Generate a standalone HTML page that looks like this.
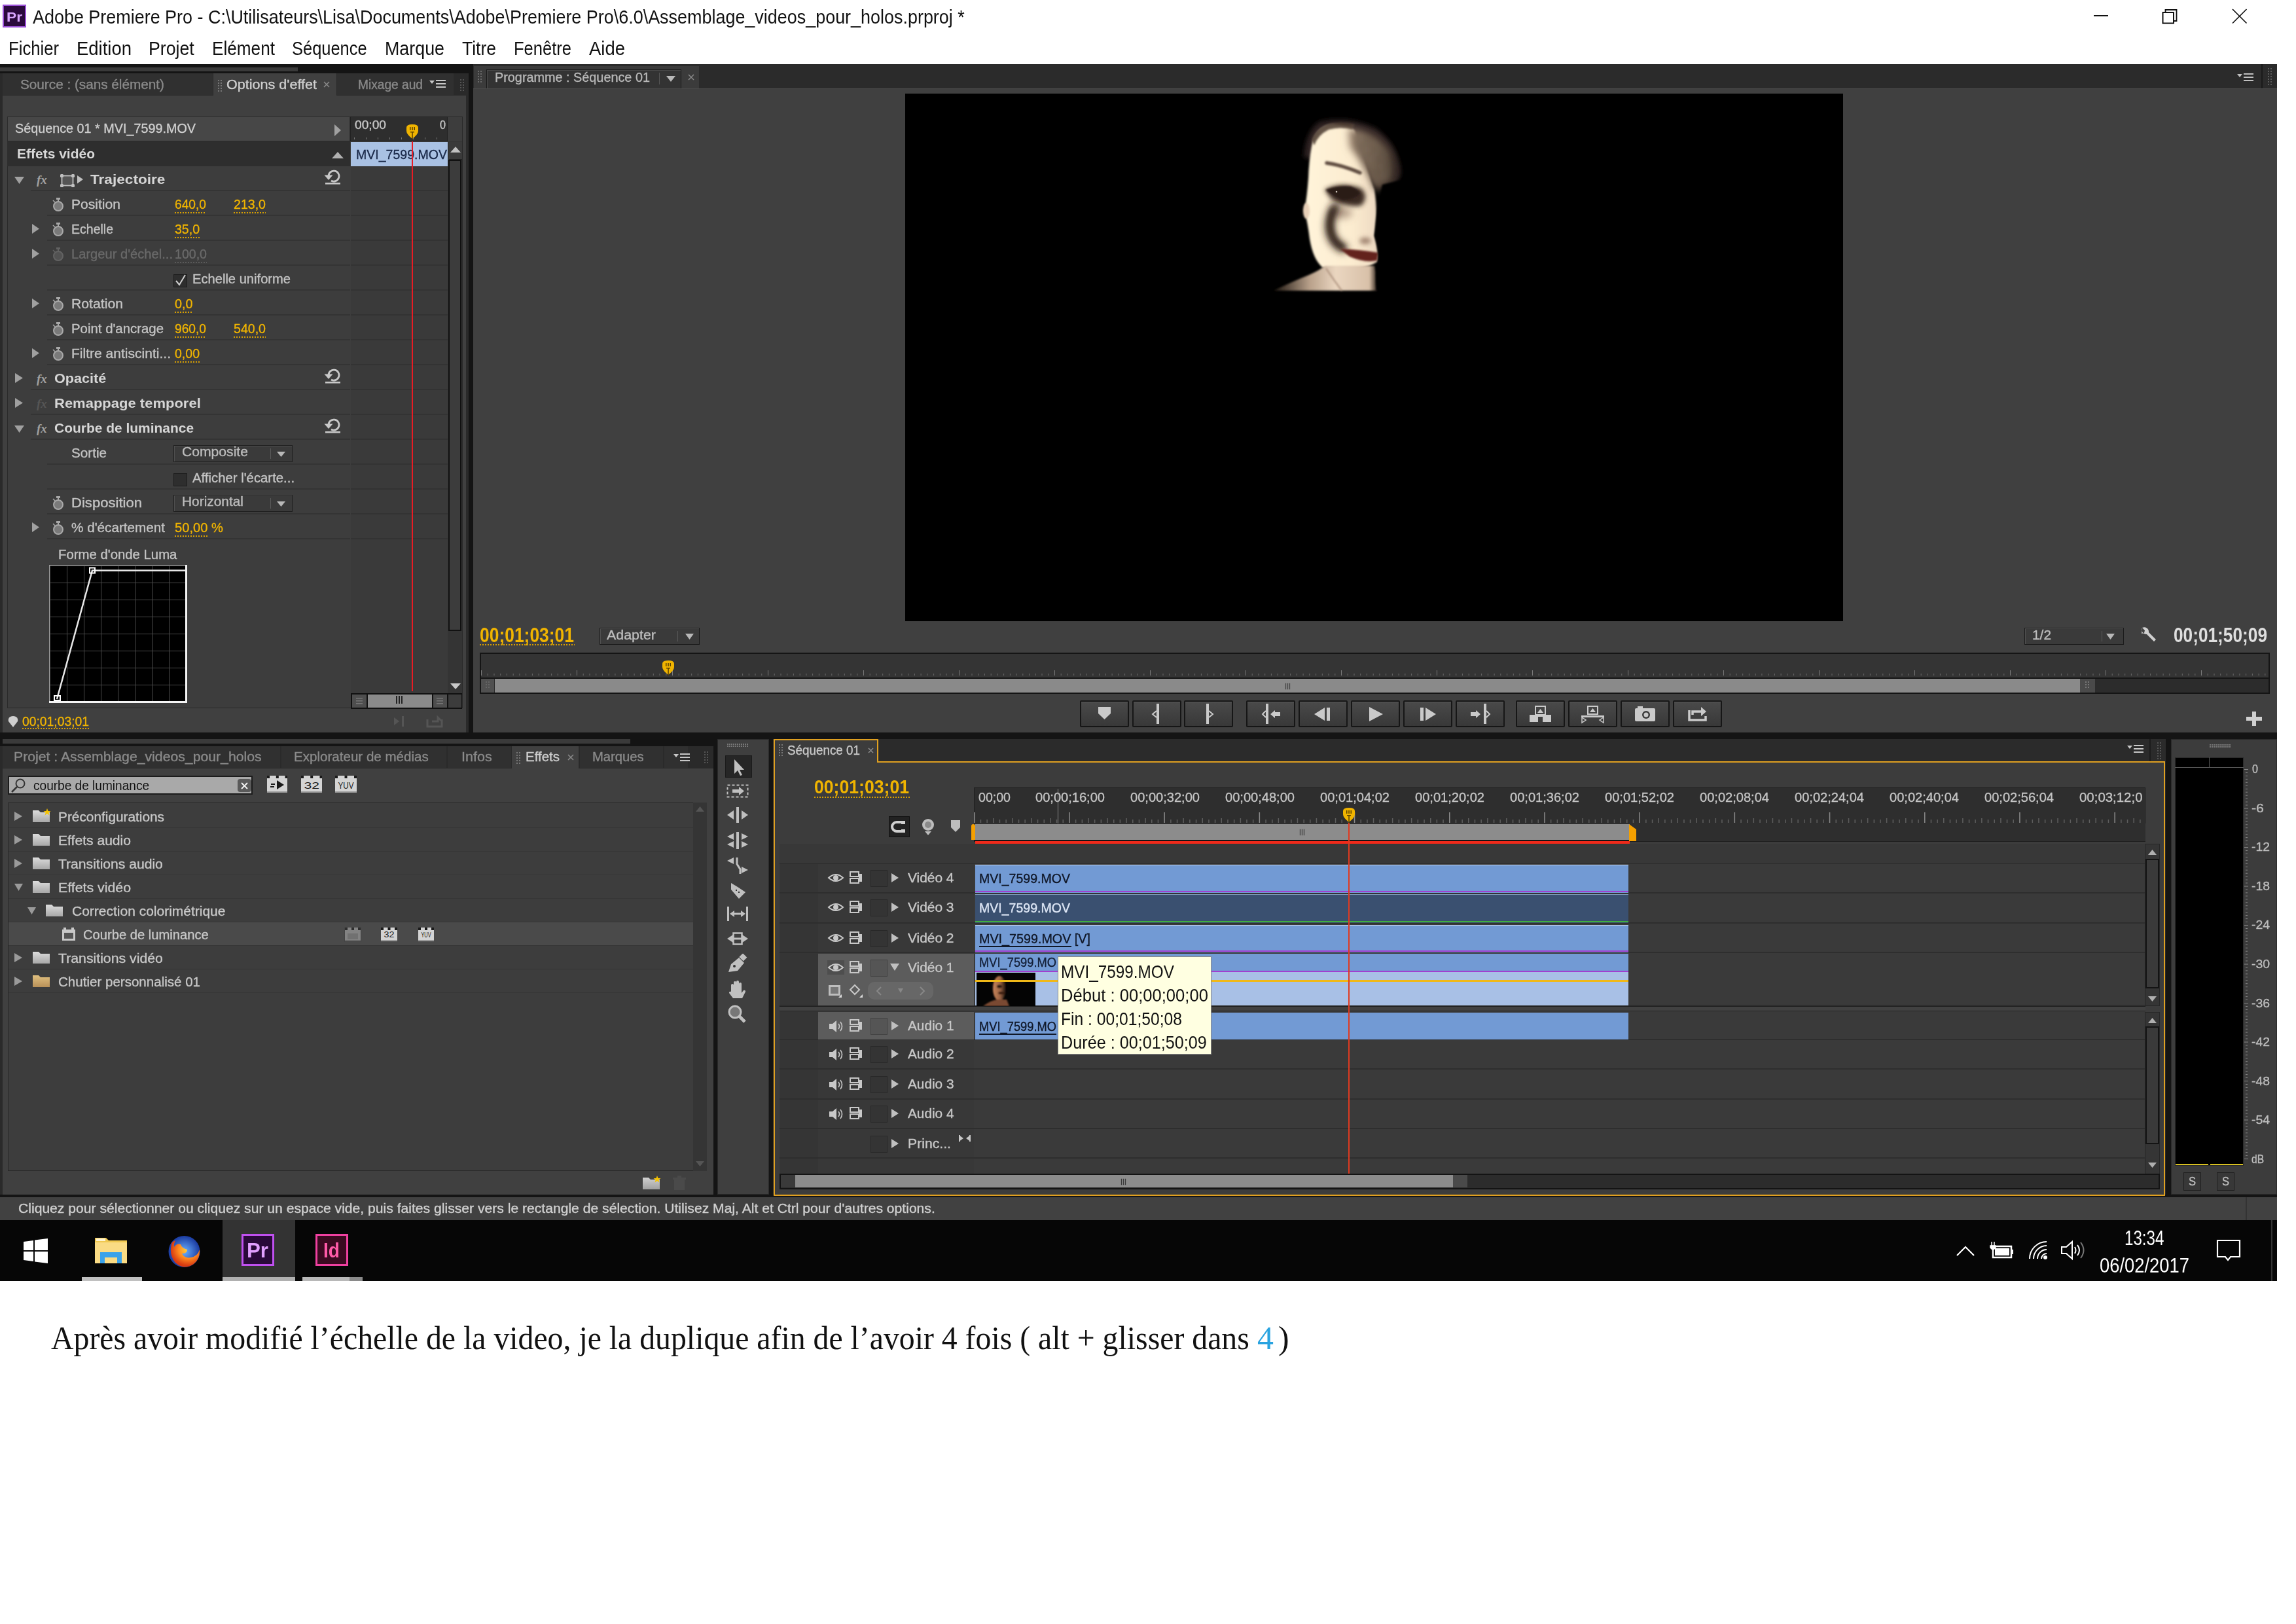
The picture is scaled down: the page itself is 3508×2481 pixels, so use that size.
<!DOCTYPE html><html><head><meta charset="utf-8"><style>
html,body{margin:0;padding:0;background:#fff;}
body{width:3508px;height:2481px;position:relative;overflow:hidden;font-family:"Liberation Sans",sans-serif;}
.a{position:absolute;box-sizing:border-box;}
.t{position:absolute;white-space:nowrap;line-height:1;transform-origin:0 0;}
.ui{-webkit-text-stroke:0.35px currentColor;}
</style></head><body>
<div class="a" style="left:4px;top:7px;width:36px;height:35px;background:#2b0a3d;border:2px solid #9a4fd6;"></div>
<div class="t" style="left:10.0px;top:15.8px;font-size:20.35px;color:#d9a6ff;font-weight:bold;transform:scaleX(1.1166);">Pr</div>
<div class="t" style="left:50.0px;top:12.0px;font-size:29.07px;color:#111;transform:scaleX(0.9268);">Adobe Premiere Pro - C:\Utilisateurs\Lisa\Documents\Adobe\Premiere Pro\6.0\Assemblage_videos_pour_holos.prproj *</div>
<div class="t" style="left:13.4px;top:60.2px;font-size:29.07px;color:#111;transform:scaleX(0.8840);">Fichier</div>
<div class="t" style="left:116.5px;top:60.2px;font-size:29.07px;color:#111;transform:scaleX(0.9451);">Edition</div>
<div class="t" style="left:227.0px;top:60.2px;font-size:29.07px;color:#111;transform:scaleX(0.9192);">Projet</div>
<div class="t" style="left:324.0px;top:60.2px;font-size:29.07px;color:#111;transform:scaleX(0.9003);">Elément</div>
<div class="t" style="left:446.0px;top:60.2px;font-size:29.07px;color:#111;transform:scaleX(0.8761);">Séquence</div>
<div class="t" style="left:588.0px;top:60.2px;font-size:29.07px;color:#111;transform:scaleX(0.9233);">Marque</div>
<div class="t" style="left:706.0px;top:60.2px;font-size:29.07px;color:#111;transform:scaleX(0.9113);">Titre</div>
<div class="t" style="left:785.0px;top:60.2px;font-size:29.07px;color:#111;transform:scaleX(0.8785);">Fenêtre</div>
<div class="t" style="left:899.6px;top:60.2px;font-size:29.07px;color:#111;transform:scaleX(0.9453);">Aide</div>
<div class="a" style="left:3199px;top:23px;width:22px;height:2px;background:#111;"></div>
<svg class="a" style="left:3303px;top:14px;" width="24" height="23" viewBox="0 0 24 23"><rect x="1.5" y="5" width="16.5" height="16.5" fill="none" stroke="#111" stroke-width="2"/><path d="M5.5 5V1h17v17h-4.5" fill="none" stroke="#111" stroke-width="1.8"/></svg>
<svg class="a" style="left:3410px;top:13px;" width="24" height="24" viewBox="0 0 24 24"><path d="M1 1L22.5 22.5M22.5 1L1 22.5" stroke="#111" stroke-width="1.7"/></svg>
<div class="a" style="left:0px;top:98px;width:3479px;height:1766px;background:#141414;"></div>
<div class="a" style="left:0px;top:103px;width:455px;height:6px;background:#3a3a3a;"></div>
<div class="a" style="left:0px;top:112px;width:716px;height:1007px;background:#2a2a2a;"></div>
<div class="a" style="left:4px;top:146px;width:708px;height:973px;background:#404040;"></div>
<div class="a" style="left:4px;top:112px;width:321px;height:33px;background:#303030;"></div>
<div class="a" style="left:326px;top:112px;width:188px;height:35px;background:#404040;"></div>
<div class="a" style="left:515px;top:112px;width:178px;height:33px;background:#303030;"></div>
<div class="t ui" style="left:31.0px;top:118.8px;font-size:20.35px;color:#8a8a8a;transform:scaleX(1.0185);">Source : (sans élément)</div>
<svg class="a" style="left:333px;top:122px;" width="6" height="18" viewBox="0 0 6 18"><rect x="0" y="0" width="2" height="2" fill="#777"/><rect x="4" y="0" width="2" height="2" fill="#777"/><rect x="0" y="4" width="2" height="2" fill="#777"/><rect x="4" y="4" width="2" height="2" fill="#777"/><rect x="0" y="8" width="2" height="2" fill="#777"/><rect x="4" y="8" width="2" height="2" fill="#777"/><rect x="0" y="12" width="2" height="2" fill="#777"/><rect x="4" y="12" width="2" height="2" fill="#777"/><rect x="0" y="16" width="2" height="2" fill="#777"/><rect x="4" y="16" width="2" height="2" fill="#777"/></svg>
<div class="t ui" style="left:346.0px;top:118.8px;font-size:20.35px;color:#cfcfcf;transform:scaleX(1.0599);">Options d'effet</div>
<svg class="a" style="left:494px;top:124px;" width="10" height="10" viewBox="0 0 10 10"><path d="M1 1L9 9M9 1L1 9" stroke="#8a8a8a" stroke-width="1.5"/></svg>
<div class="t ui" style="left:547.0px;top:118.8px;font-size:20.35px;color:#8a8a8a;transform:scaleX(0.9411);">Mixage aud</div>
<svg class="a" style="left:656px;top:120px;" width="26" height="16" viewBox="0 0 26 16"><polygon points="0,3 8,3 4,8" fill="#c8c8c8"/><rect x="10" y="2" width="15" height="2" fill="#c8c8c8"/><rect x="10" y="7" width="15" height="2" fill="#c8c8c8"/><rect x="10" y="12" width="15" height="2" fill="#c8c8c8"/></svg>
<svg class="a" style="left:703px;top:121px;" width="6" height="18" viewBox="0 0 6 18"><rect x="0" y="0" width="2" height="2" fill="#555"/><rect x="4" y="0" width="2" height="2" fill="#555"/><rect x="0" y="4" width="2" height="2" fill="#555"/><rect x="4" y="4" width="2" height="2" fill="#555"/><rect x="0" y="8" width="2" height="2" fill="#555"/><rect x="4" y="8" width="2" height="2" fill="#555"/><rect x="0" y="12" width="2" height="2" fill="#555"/><rect x="4" y="12" width="2" height="2" fill="#555"/><rect x="0" y="16" width="2" height="2" fill="#555"/><rect x="4" y="16" width="2" height="2" fill="#555"/></svg>
<div class="a" style="left:11px;top:178px;width:696px;height:904px;background:#3d3d3d;border:1px solid #2a2a2a;"></div>
<div class="a" style="left:11px;top:178px;width:524px;height:38px;background:#474747;border:1px solid #2c2c2c;"></div>
<div class="t ui" style="left:22.6px;top:185.2px;font-size:21.08px;color:#cfcfcf;transform:scaleX(0.9386);">Séquence 01 * MVI_7599.MOV</div>
<svg class="a" style="left:511px;top:190px;" width="10" height="18" viewBox="0 0 10 18"><polygon points="0,0 10,9.0 0,18" fill="#a0a0a0"/></svg>
<div class="a" style="left:535px;top:178px;width:149px;height:38px;background:#2e2e2e;border:1px solid #222;"></div>
<div class="t ui" style="left:541.5px;top:181.5px;font-size:18.90px;color:#c8c8c8;transform:scaleX(1.0152);">00;00</div>
<div class="t ui" style="left:671.8px;top:181.5px;font-size:18.90px;color:#c8c8c8;transform:scaleX(0.8565);">0</div>
<div class="a" style="left:541px;top:210px;width:1px;height:3px;background:#777;"></div>
<div class="a" style="left:559px;top:210px;width:1px;height:3px;background:#777;"></div>
<div class="a" style="left:577px;top:210px;width:1px;height:3px;background:#777;"></div>
<div class="a" style="left:595px;top:210px;width:1px;height:3px;background:#777;"></div>
<div class="a" style="left:613px;top:210px;width:1px;height:3px;background:#777;"></div>
<div class="a" style="left:631px;top:210px;width:1px;height:3px;background:#777;"></div>
<div class="a" style="left:649px;top:210px;width:1px;height:3px;background:#777;"></div>
<div class="a" style="left:667px;top:210px;width:1px;height:3px;background:#777;"></div>
<div class="a" style="left:11px;top:216px;width:524px;height:38px;background:#2e2e2e;"></div>
<div class="t" style="left:26.0px;top:224.2px;font-size:21.08px;color:#d8d8d8;font-weight:bold;transform:scaleX(0.9963);">Effets vidéo</div>
<svg class="a" style="left:507px;top:232px;" width="18" height="10" viewBox="0 0 18 10"><polygon points="0,10 18,10 9.0,0" fill="#b0b0b0"/></svg>
<div class="a" style="left:536px;top:217px;width:148px;height:37px;background:#a9c1e3;"></div>
<div class="t ui" style="left:544.0px;top:224.8px;font-size:21.08px;color:#1b2a4a;transform:scaleX(0.9271);">MVI_7599.MOV</div>
<div class="a" style="left:536px;top:254px;width:148px;height:806px;background:#3a3a3a;"></div>
<div class="a" style="left:684px;top:216px;width:22px;height:866px;background:#343434;"></div>
<div class="a" style="left:685px;top:244px;width:20px;height:720px;background:#3c3c3c;border:2px solid #111;"></div>
<div class="a" style="left:686px;top:217px;width:20px;height:27px;background:#3a3a3a;border-bottom:1px solid #222;"></div>
<svg class="a" style="left:688px;top:224px;" width="16" height="9" viewBox="0 0 16 9"><polygon points="0,9 16,9 8.0,0" fill="#c0c0c0"/></svg>
<svg class="a" style="left:688px;top:1044px;" width="16" height="9" viewBox="0 0 16 9"><polygon points="0,0 16,0 8.0,9" fill="#c8c8c8"/></svg>
<div class="a" style="left:47px;top:290px;width:488px;height:2px;background:#343434;"></div>
<div class="a" style="left:536px;top:290px;width:148px;height:2px;background:#333333;"></div>
<svg class="a" style="left:22px;top:270px;" width="15" height="11" viewBox="0 0 15 11"><polygon points="0,0 15,0 7.5,11" fill="#a0a0a0"/></svg>
<svg class="a" style="left:56px;top:264px;" width="22" height="22" viewBox="0 0 22 22"><text x="0" y="17" font-family="Liberation Serif" font-style="italic" font-weight="bold" font-size="19" fill="#a0a0a0">fx</text></svg>
<svg class="a" style="left:495px;top:256px;" width="26" height="26" viewBox="0 0 26 26"><path d="M7 13A8 8 0 1 1 11 20" fill="none" stroke="#c8c8c8" stroke-width="2.8"/><polygon points="0.5,11.5 13.5,11.5 7,19" fill="#c8c8c8"/><rect x="2" y="23" width="23" height="2.6" fill="#c8c8c8"/></svg>
<div class="t" style="left:138.0px;top:263.2px;font-size:21.08px;color:#d6d6d6;font-weight:bold;transform:scaleX(1.0732);">Trajectoire</div>
<div class="a" style="left:72px;top:328px;width:463px;height:2px;background:#343434;"></div>
<div class="a" style="left:536px;top:328px;width:148px;height:2px;background:#333333;"></div>
<svg class="a" style="left:79px;top:301px;" width="20" height="22" viewBox="0 0 20 22"><g opacity="1"><rect x="7" y="1" width="6" height="3" fill="#a8a8a8"/><rect x="9" y="3" width="2" height="4" fill="#a8a8a8"/><circle cx="10" cy="14" r="7" fill="#7a7a7a" stroke="#a8a8a8" stroke-width="2"/><path d="M2 5l3 3" stroke="#a8a8a8" stroke-width="1.5"/></g></svg>
<div class="t ui" style="left:109.0px;top:301.2px;font-size:21.08px;color:#c4c4c4;transform:scaleX(1.0003);">Position</div>
<div class="a" style="left:72px;top:366px;width:463px;height:2px;background:#343434;"></div>
<div class="a" style="left:536px;top:366px;width:148px;height:2px;background:#333333;"></div>
<svg class="a" style="left:49px;top:342px;" width="11" height="15" viewBox="0 0 11 15"><polygon points="0,0 11,7.5 0,15" fill="#a0a0a0"/></svg>
<svg class="a" style="left:79px;top:339px;" width="20" height="22" viewBox="0 0 20 22"><g opacity="1"><rect x="7" y="1" width="6" height="3" fill="#a8a8a8"/><rect x="9" y="3" width="2" height="4" fill="#a8a8a8"/><circle cx="10" cy="14" r="7" fill="#7a7a7a" stroke="#a8a8a8" stroke-width="2"/><path d="M2 5l3 3" stroke="#a8a8a8" stroke-width="1.5"/></g></svg>
<div class="t ui" style="left:109.0px;top:339.2px;font-size:21.08px;color:#c4c4c4;transform:scaleX(0.9259);">Echelle</div>
<div class="a" style="left:72px;top:404px;width:463px;height:2px;background:#343434;"></div>
<div class="a" style="left:536px;top:404px;width:148px;height:2px;background:#333333;"></div>
<svg class="a" style="left:49px;top:380px;" width="11" height="15" viewBox="0 0 11 15"><polygon points="0,0 11,7.5 0,15" fill="#a0a0a0"/></svg>
<svg class="a" style="left:79px;top:377px;" width="20" height="22" viewBox="0 0 20 22"><g opacity="0.35"><rect x="7" y="1" width="6" height="3" fill="#a8a8a8"/><rect x="9" y="3" width="2" height="4" fill="#a8a8a8"/><circle cx="10" cy="14" r="7" fill="#7a7a7a" stroke="#a8a8a8" stroke-width="2"/><path d="M2 5l3 3" stroke="#a8a8a8" stroke-width="1.5"/></g></svg>
<div class="t ui" style="left:109.0px;top:377.2px;font-size:21.08px;color:#6a6a6a;transform:scaleX(0.9557);">Largeur d'échel...</div>
<div class="a" style="left:72px;top:442px;width:463px;height:2px;background:#343434;"></div>
<div class="a" style="left:536px;top:442px;width:148px;height:2px;background:#333333;"></div>
<svg class="a" style="left:265px;top:419px;" width="22" height="21" viewBox="0 0 22 21"><rect x="0.5" y="0.5" width="20" height="19" fill="#2e2e2e" stroke="#1c1c1c"/><path d="M4 10l5 6l9 -15" fill="none" stroke="#d0d0d0" stroke-width="2"/></svg>
<div class="t ui" style="left:294.0px;top:415.2px;font-size:21.08px;color:#c4c4c4;transform:scaleX(0.9556);">Echelle uniforme</div>
<div class="a" style="left:72px;top:480px;width:463px;height:2px;background:#343434;"></div>
<div class="a" style="left:536px;top:480px;width:148px;height:2px;background:#333333;"></div>
<svg class="a" style="left:49px;top:456px;" width="11" height="15" viewBox="0 0 11 15"><polygon points="0,0 11,7.5 0,15" fill="#a0a0a0"/></svg>
<svg class="a" style="left:79px;top:453px;" width="20" height="22" viewBox="0 0 20 22"><g opacity="1"><rect x="7" y="1" width="6" height="3" fill="#a8a8a8"/><rect x="9" y="3" width="2" height="4" fill="#a8a8a8"/><circle cx="10" cy="14" r="7" fill="#7a7a7a" stroke="#a8a8a8" stroke-width="2"/><path d="M2 5l3 3" stroke="#a8a8a8" stroke-width="1.5"/></g></svg>
<div class="t ui" style="left:109.0px;top:453.2px;font-size:21.08px;color:#c4c4c4;transform:scaleX(1.0065);">Rotation</div>
<div class="a" style="left:72px;top:518px;width:463px;height:2px;background:#343434;"></div>
<div class="a" style="left:536px;top:518px;width:148px;height:2px;background:#333333;"></div>
<svg class="a" style="left:79px;top:491px;" width="20" height="22" viewBox="0 0 20 22"><g opacity="1"><rect x="7" y="1" width="6" height="3" fill="#a8a8a8"/><rect x="9" y="3" width="2" height="4" fill="#a8a8a8"/><circle cx="10" cy="14" r="7" fill="#7a7a7a" stroke="#a8a8a8" stroke-width="2"/><path d="M2 5l3 3" stroke="#a8a8a8" stroke-width="1.5"/></g></svg>
<div class="t ui" style="left:109.0px;top:491.2px;font-size:21.08px;color:#c4c4c4;transform:scaleX(0.9671);">Point d'ancrage</div>
<div class="a" style="left:72px;top:556px;width:463px;height:2px;background:#343434;"></div>
<div class="a" style="left:536px;top:556px;width:148px;height:2px;background:#333333;"></div>
<svg class="a" style="left:49px;top:532px;" width="11" height="15" viewBox="0 0 11 15"><polygon points="0,0 11,7.5 0,15" fill="#a0a0a0"/></svg>
<svg class="a" style="left:79px;top:529px;" width="20" height="22" viewBox="0 0 20 22"><g opacity="1"><rect x="7" y="1" width="6" height="3" fill="#a8a8a8"/><rect x="9" y="3" width="2" height="4" fill="#a8a8a8"/><circle cx="10" cy="14" r="7" fill="#7a7a7a" stroke="#a8a8a8" stroke-width="2"/><path d="M2 5l3 3" stroke="#a8a8a8" stroke-width="1.5"/></g></svg>
<div class="t ui" style="left:109.0px;top:529.2px;font-size:21.08px;color:#c4c4c4;transform:scaleX(0.9984);">Filtre antiscinti...</div>
<div class="a" style="left:47px;top:594px;width:488px;height:2px;background:#343434;"></div>
<div class="a" style="left:536px;top:594px;width:148px;height:2px;background:#333333;"></div>
<svg class="a" style="left:23px;top:570px;" width="12" height="15" viewBox="0 0 12 15"><polygon points="0,0 12,7.5 0,15" fill="#a0a0a0"/></svg>
<svg class="a" style="left:56px;top:568px;" width="22" height="22" viewBox="0 0 22 22"><text x="0" y="17" font-family="Liberation Serif" font-style="italic" font-weight="bold" font-size="19" fill="#a0a0a0">fx</text></svg>
<svg class="a" style="left:495px;top:560px;" width="26" height="26" viewBox="0 0 26 26"><path d="M7 13A8 8 0 1 1 11 20" fill="none" stroke="#c8c8c8" stroke-width="2.8"/><polygon points="0.5,11.5 13.5,11.5 7,19" fill="#c8c8c8"/><rect x="2" y="23" width="23" height="2.6" fill="#c8c8c8"/></svg>
<div class="t" style="left:83.0px;top:567.2px;font-size:21.08px;color:#d6d6d6;font-weight:bold;transform:scaleX(1.0259);">Opacité</div>
<div class="a" style="left:47px;top:632px;width:488px;height:2px;background:#343434;"></div>
<div class="a" style="left:536px;top:632px;width:148px;height:2px;background:#333333;"></div>
<svg class="a" style="left:23px;top:608px;" width="12" height="15" viewBox="0 0 12 15"><polygon points="0,0 12,7.5 0,15" fill="#a0a0a0"/></svg>
<svg class="a" style="left:56px;top:606px;" width="22" height="22" viewBox="0 0 22 22"><text x="0" y="17" font-family="Liberation Serif" font-style="italic" font-weight="bold" font-size="19" fill="#555">fx</text></svg>
<div class="t" style="left:83.0px;top:605.2px;font-size:21.08px;color:#d6d6d6;font-weight:bold;transform:scaleX(1.0438);">Remappage temporel</div>
<div class="a" style="left:47px;top:670px;width:488px;height:2px;background:#343434;"></div>
<div class="a" style="left:536px;top:670px;width:148px;height:2px;background:#333333;"></div>
<svg class="a" style="left:22px;top:650px;" width="15" height="11" viewBox="0 0 15 11"><polygon points="0,0 15,0 7.5,11" fill="#a0a0a0"/></svg>
<svg class="a" style="left:56px;top:644px;" width="22" height="22" viewBox="0 0 22 22"><text x="0" y="17" font-family="Liberation Serif" font-style="italic" font-weight="bold" font-size="19" fill="#a0a0a0">fx</text></svg>
<svg class="a" style="left:495px;top:636px;" width="26" height="26" viewBox="0 0 26 26"><path d="M7 13A8 8 0 1 1 11 20" fill="none" stroke="#c8c8c8" stroke-width="2.8"/><polygon points="0.5,11.5 13.5,11.5 7,19" fill="#c8c8c8"/><rect x="2" y="23" width="23" height="2.6" fill="#c8c8c8"/></svg>
<div class="t" style="left:83.0px;top:643.2px;font-size:21.08px;color:#d6d6d6;font-weight:bold;transform:scaleX(0.9940);">Courbe de luminance</div>
<div class="a" style="left:72px;top:708px;width:463px;height:2px;background:#343434;"></div>
<div class="a" style="left:536px;top:708px;width:148px;height:2px;background:#333333;"></div>
<div class="t ui" style="left:109.0px;top:681.2px;font-size:21.08px;color:#c4c4c4;transform:scaleX(0.9809);">Sortie</div>
<div class="a" style="left:72px;top:746px;width:463px;height:2px;background:#343434;"></div>
<div class="a" style="left:536px;top:746px;width:148px;height:2px;background:#333333;"></div>
<svg class="a" style="left:265px;top:723px;" width="22" height="21" viewBox="0 0 22 21"><rect x="0.5" y="0.5" width="20" height="19" fill="#2e2e2e" stroke="#1c1c1c"/></svg>
<div class="t ui" style="left:294.0px;top:719.2px;font-size:21.08px;color:#c4c4c4;transform:scaleX(0.9644);">Afficher l'écarte...</div>
<div class="a" style="left:72px;top:784px;width:463px;height:2px;background:#343434;"></div>
<div class="a" style="left:536px;top:784px;width:148px;height:2px;background:#333333;"></div>
<svg class="a" style="left:79px;top:757px;" width="20" height="22" viewBox="0 0 20 22"><g opacity="1"><rect x="7" y="1" width="6" height="3" fill="#a8a8a8"/><rect x="9" y="3" width="2" height="4" fill="#a8a8a8"/><circle cx="10" cy="14" r="7" fill="#7a7a7a" stroke="#a8a8a8" stroke-width="2"/><path d="M2 5l3 3" stroke="#a8a8a8" stroke-width="1.5"/></g></svg>
<div class="t ui" style="left:109.0px;top:757.2px;font-size:21.08px;color:#c4c4c4;transform:scaleX(1.0477);">Disposition</div>
<div class="a" style="left:72px;top:822px;width:463px;height:2px;background:#343434;"></div>
<div class="a" style="left:536px;top:822px;width:148px;height:2px;background:#333333;"></div>
<svg class="a" style="left:49px;top:798px;" width="11" height="15" viewBox="0 0 11 15"><polygon points="0,0 11,7.5 0,15" fill="#a0a0a0"/></svg>
<svg class="a" style="left:79px;top:795px;" width="20" height="22" viewBox="0 0 20 22"><g opacity="1"><rect x="7" y="1" width="6" height="3" fill="#a8a8a8"/><rect x="9" y="3" width="2" height="4" fill="#a8a8a8"/><circle cx="10" cy="14" r="7" fill="#7a7a7a" stroke="#a8a8a8" stroke-width="2"/><path d="M2 5l3 3" stroke="#a8a8a8" stroke-width="1.5"/></g></svg>
<div class="t ui" style="left:109.0px;top:795.2px;font-size:21.08px;color:#c4c4c4;transform:scaleX(0.9811);">% d'écartement</div>
<svg class="a" style="left:92px;top:266px;" width="36" height="22" viewBox="0 0 36 22"><rect x="2.5" y="2.5" width="17" height="15" fill="#555" stroke="#c0c0c0" stroke-width="1.8"/><rect x="0" y="0" width="5" height="5" rx="1.5" fill="#c0c0c0"/><rect x="17" y="0" width="5" height="5" rx="1.5" fill="#c0c0c0"/><rect x="0" y="15" width="5" height="5" rx="1.5" fill="#c0c0c0"/><rect x="17" y="15" width="5" height="5" rx="1.5" fill="#c0c0c0"/><polygon points="26,2 35,8 26,14.5" fill="#c0c0c0"/></svg>
<div class="t ui" style="left:266.5px;top:301.2px;font-size:21.08px;color:#f0b400;transform:scaleX(0.9102);">640,0</div>
<div class="a" style="left:266.5px;top:324px;width:48px;height:2px;background-image:repeating-linear-gradient(90deg,#d9a000 0 2px,transparent 2px 4px);"></div>
<div class="t ui" style="left:357.0px;top:301.2px;font-size:21.08px;color:#f0b400;transform:scaleX(0.9292);">213,0</div>
<div class="a" style="left:357px;top:324px;width:49px;height:2px;background-image:repeating-linear-gradient(90deg,#d9a000 0 2px,transparent 2px 4px);"></div>
<div class="t ui" style="left:266.5px;top:339.2px;font-size:21.08px;color:#f0b400;transform:scaleX(0.9265);">35,0</div>
<div class="a" style="left:266.5px;top:362px;width:38px;height:2px;background-image:repeating-linear-gradient(90deg,#d9a000 0 2px,transparent 2px 4px);"></div>
<div class="t ui" style="left:266.5px;top:453.2px;font-size:21.08px;color:#f0b400;transform:scaleX(0.9387);">0,0</div>
<div class="a" style="left:266.5px;top:476px;width:27.5px;height:2px;background-image:repeating-linear-gradient(90deg,#d9a000 0 2px,transparent 2px 4px);"></div>
<div class="t ui" style="left:266.5px;top:491.2px;font-size:21.08px;color:#f0b400;transform:scaleX(0.9102);">960,0</div>
<div class="a" style="left:266.5px;top:514px;width:48px;height:2px;background-image:repeating-linear-gradient(90deg,#d9a000 0 2px,transparent 2px 4px);"></div>
<div class="t ui" style="left:357.0px;top:491.2px;font-size:21.08px;color:#f0b400;transform:scaleX(0.9292);">540,0</div>
<div class="a" style="left:357px;top:514px;width:49px;height:2px;background-image:repeating-linear-gradient(90deg,#d9a000 0 2px,transparent 2px 4px);"></div>
<div class="t ui" style="left:266.5px;top:529.2px;font-size:21.08px;color:#f0b400;transform:scaleX(0.9265);">0,00</div>
<div class="a" style="left:266.5px;top:552px;width:38px;height:2px;background-image:repeating-linear-gradient(90deg,#d9a000 0 2px,transparent 2px 4px);"></div>
<div class="t ui" style="left:266.5px;top:795.2px;font-size:21.08px;color:#f0b400;transform:scaleX(0.9569);">50,00 %</div>
<div class="a" style="left:266.5px;top:818px;width:50px;height:2px;background-image:repeating-linear-gradient(90deg,#d9a000 0 2px,transparent 2px 4px);"></div>
<div class="t ui" style="left:266.5px;top:377.2px;font-size:21.08px;color:#6a6a6a;transform:scaleX(0.9292);">100,0</div>
<div class="a" style="left:266.5px;top:400px;width:49px;height:2px;background-image:repeating-linear-gradient(90deg,#5a5a5a 0 2px,transparent 2px 4px);"></div>
<div class="a" style="left:265px;top:680px;width:182px;height:26px;background:#3a3a3a;border:1px solid #1e1e1e;box-shadow:inset 1px 1px 0 #505050;"></div>
<div class="t ui" style="left:278.0px;top:679.8px;font-size:20.35px;color:#bdbdbd;transform:scaleX(1.0385);">Composite</div>
<div class="a" style="left:413px;top:685px;width:1px;height:16px;background:#5a5a5a;"></div>
<svg class="a" style="left:423px;top:690px;" width="13" height="8" viewBox="0 0 13 8"><polygon points="0,0 13,0 6.5,8" fill="#b8b8b8"/></svg>
<div class="a" style="left:265px;top:756px;width:182px;height:26px;background:#3a3a3a;border:1px solid #1e1e1e;box-shadow:inset 1px 1px 0 #505050;"></div>
<div class="t ui" style="left:278.0px;top:755.8px;font-size:20.35px;color:#bdbdbd;transform:scaleX(1.0261);">Horizontal</div>
<div class="a" style="left:413px;top:761px;width:1px;height:16px;background:#5a5a5a;"></div>
<svg class="a" style="left:423px;top:766px;" width="13" height="8" viewBox="0 0 13 8"><polygon points="0,0 13,0 6.5,8" fill="#b8b8b8"/></svg>
<div class="t ui" style="left:88.6px;top:836.2px;font-size:21.08px;color:#c4c4c4;transform:scaleX(0.9652);">Forme d'onde Luma</div>
<svg class="a" style="left:75px;top:863px;" width="211" height="211" viewBox="0 0 211 211"><rect x="0" y="0" width="211" height="211" fill="#000"/><rect x="27.0" y="2" width="1" height="206" fill="#4a4a4a"/><rect x="2" y="27.0" width="206" height="1" fill="#4a4a4a"/><rect x="53.0" y="2" width="1" height="206" fill="#4a4a4a"/><rect x="2" y="53.0" width="206" height="1" fill="#4a4a4a"/><rect x="79.0" y="2" width="1" height="206" fill="#4a4a4a"/><rect x="2" y="79.0" width="206" height="1" fill="#4a4a4a"/><rect x="105.0" y="2" width="1" height="206" fill="#4a4a4a"/><rect x="2" y="105.0" width="206" height="1" fill="#4a4a4a"/><rect x="131.0" y="2" width="1" height="206" fill="#4a4a4a"/><rect x="2" y="131.0" width="206" height="1" fill="#4a4a4a"/><rect x="157.0" y="2" width="1" height="206" fill="#4a4a4a"/><rect x="2" y="157.0" width="206" height="1" fill="#4a4a4a"/><rect x="183.0" y="2" width="1" height="206" fill="#4a4a4a"/><rect x="2" y="183.0" width="206" height="1" fill="#4a4a4a"/><rect x="0" y="0" width="211" height="1.5" fill="#9a9a9a"/><rect x="0" y="0" width="1.5" height="211" fill="#9a9a9a"/><rect x="208" y="0" width="3" height="211" fill="#f4f4f4"/><rect x="0" y="208" width="211" height="3" fill="#f4f4f4"/><path d="M12 205L66 8.5L208 8.5" fill="none" stroke="#e8e8e8" stroke-width="2.5"/><rect x="62" y="4.5" width="8" height="8" fill="none" stroke="#fff" stroke-width="2"/><rect x="8" y="200" width="9" height="7" fill="none" stroke="#fff" stroke-width="2"/></svg>
<div class="a" style="left:629px;top:216px;width:2px;height:840px;background:#e81c24;"></div>
<svg class="a" style="left:620px;top:190px;" width="20" height="24" viewBox="0 0 20 24"><path d="M1 5Q1 0 10 0Q19 0 19 5L19 10Q19 15 10 22Q1 15 1 10Z" fill="#f0b400"/><rect x="6" y="4" width="1.5" height="5" fill="#5a4000"/><rect x="9.3" y="4" width="1.5" height="5" fill="#5a4000"/><rect x="12.5" y="4" width="1.5" height="5" fill="#5a4000"/><rect x="7" y="11" width="6" height="1.5" fill="#5a4000"/><rect x="9.3" y="11" width="1.5" height="12" fill="#5a4000"/></svg>
<div class="a" style="left:536px;top:1059px;width:170px;height:24px;background:#111;"></div>
<div class="a" style="left:538px;top:1061px;width:22px;height:20px;background:#4e4e4e;"></div>
<svg class="a" style="left:544px;top:1065px;" width="10" height="12" viewBox="0 0 10 12"><rect x="0" y="1" width="10" height="1.5" fill="#777"/><rect x="0" y="5" width="10" height="1.5" fill="#777"/><rect x="0" y="9" width="10" height="1.5" fill="#777"/></svg>
<div class="a" style="left:562px;top:1061px;width:98px;height:20px;background:#8a8a8a;"></div>
<div class="a" style="left:662px;top:1061px;width:21px;height:20px;background:#4e4e4e;"></div>
<svg class="a" style="left:667px;top:1065px;" width="10" height="12" viewBox="0 0 10 12"><rect x="0" y="1" width="10" height="1.5" fill="#777"/><rect x="0" y="5" width="10" height="1.5" fill="#777"/><rect x="0" y="9" width="10" height="1.5" fill="#777"/></svg>
<div class="a" style="left:685px;top:1061px;width:20px;height:20px;background:#3c3c3c;"></div>
<svg class="a" style="left:605px;top:1063px;" width="11" height="13" viewBox="0 0 11 13"><rect x="0" y="0" width="2" height="12" fill="#222"/><rect x="4" y="0" width="2" height="12" fill="#222"/><rect x="8" y="0" width="2" height="12" fill="#222"/></svg>
<svg class="a" style="left:12px;top:1094px;" width="16" height="18" viewBox="0 0 16 18"><path d="M8 0C14 0 16 4 15 8L8 17L1 8C0 4 2 0 8 0Z" fill="#cfcfcf"/></svg>
<div class="t ui" style="left:34.0px;top:1091.5px;font-size:20.35px;color:#f0b400;transform:scaleX(0.9490);">00;01;03;01</div>
<div class="a" style="left:34px;top:1112px;width:103px;height:2px;background-image:repeating-linear-gradient(90deg,#d9a000 0 2px,transparent 2px 4px);"></div>
<svg class="a" style="left:600px;top:1092px;" width="24" height="20" viewBox="0 0 24 20"><polygon points="2,4 10,10 2,16" fill="#555"/><rect x="14" y="2" width="3" height="16" fill="#555"/></svg>
<svg class="a" style="left:650px;top:1090px;" width="28" height="22" viewBox="0 0 28 22"><path d="M3 9v11h22v-11" fill="none" stroke="#555" stroke-width="3"/><path d="M10 12h9v-6l5 5" fill="none" stroke="#555" stroke-width="3"/></svg>
<div class="a" style="left:723px;top:98px;width:2756px;height:38px;background:#2b2b2b;"></div>
<div class="a" style="left:724px;top:101px;width:344px;height:35px;background:#3b3b3b;"></div>
<svg class="a" style="left:730px;top:108px;" width="6" height="18" viewBox="0 0 6 18"><rect x="0" y="0" width="2" height="2" fill="#6a6a6a"/><rect x="4" y="0" width="2" height="2" fill="#6a6a6a"/><rect x="0" y="4" width="2" height="2" fill="#6a6a6a"/><rect x="4" y="4" width="2" height="2" fill="#6a6a6a"/><rect x="0" y="8" width="2" height="2" fill="#6a6a6a"/><rect x="4" y="8" width="2" height="2" fill="#6a6a6a"/><rect x="0" y="12" width="2" height="2" fill="#6a6a6a"/><rect x="4" y="12" width="2" height="2" fill="#6a6a6a"/><rect x="0" y="16" width="2" height="2" fill="#6a6a6a"/><rect x="4" y="16" width="2" height="2" fill="#6a6a6a"/></svg>
<div class="a" style="left:743px;top:106px;width:298px;height:30px;background:#333;border:1px solid #1a1a1a;box-shadow:inset 1px 1px 0 #4a4a4a;"></div>
<div class="t ui" style="left:755.6px;top:108.3px;font-size:20.35px;color:#b8b8b8;transform:scaleX(0.9746);">Programme : Séquence 01</div>
<div class="a" style="left:1007px;top:111px;width:1px;height:18px;background:#555;"></div>
<svg class="a" style="left:1018px;top:116px;" width="14" height="9" viewBox="0 0 14 9"><polygon points="0,0 14,0 7.0,9" fill="#b8b8b8"/></svg>
<svg class="a" style="left:1051px;top:113px;" width="10" height="10" viewBox="0 0 10 10"><path d="M1 1L9 9M9 1L1 9" stroke="#8a8a8a" stroke-width="1.5"/></svg>
<svg class="a" style="left:3418px;top:110px;" width="26" height="16" viewBox="0 0 26 16"><polygon points="0,3 8,3 4,8" fill="#c0c0c0"/><rect x="10" y="2" width="15" height="2" fill="#c0c0c0"/><rect x="10" y="7" width="15" height="2" fill="#c0c0c0"/><rect x="10" y="12" width="15" height="2" fill="#c0c0c0"/></svg>
<svg class="a" style="left:3465px;top:104px;" width="6" height="28" viewBox="0 0 6 28"><rect x="0" y="0" width="2" height="2" fill="#5a5a5a"/><rect x="4" y="0" width="2" height="2" fill="#5a5a5a"/><rect x="0" y="4" width="2" height="2" fill="#5a5a5a"/><rect x="4" y="4" width="2" height="2" fill="#5a5a5a"/><rect x="0" y="8" width="2" height="2" fill="#5a5a5a"/><rect x="4" y="8" width="2" height="2" fill="#5a5a5a"/><rect x="0" y="12" width="2" height="2" fill="#5a5a5a"/><rect x="4" y="12" width="2" height="2" fill="#5a5a5a"/><rect x="0" y="16" width="2" height="2" fill="#5a5a5a"/><rect x="4" y="16" width="2" height="2" fill="#5a5a5a"/><rect x="0" y="20" width="2" height="2" fill="#5a5a5a"/><rect x="4" y="20" width="2" height="2" fill="#5a5a5a"/><rect x="0" y="24" width="2" height="2" fill="#5a5a5a"/><rect x="4" y="24" width="2" height="2" fill="#5a5a5a"/></svg>
<div class="a" style="left:3455px;top:98px;width:2px;height:38px;background:#1a1a1a;"></div>
<div class="a" style="left:723px;top:135px;width:2756px;height:1px;background:#4a4a4a;"></div>
<div class="a" style="left:3476px;top:136px;width:3px;height:983px;background:#262626;"></div>
<div class="a" style="left:723px;top:136px;width:2756px;height:983px;background:#404040;"></div>
<div class="a" style="left:1383px;top:143px;width:1433px;height:806px;background:#000;"></div>
<svg class="a" style="left:1900px;top:160px;" width="280" height="290" viewBox="0 0 280 290"><g transform="translate(-1900,-160)"><defs>
<filter id="b1" filterUnits="userSpaceOnUse" x="1880" y="150" width="320" height="320"><feGaussianBlur stdDeviation="1.4"/></filter>
<filter id="b2" filterUnits="userSpaceOnUse" x="1880" y="150" width="320" height="320"><feGaussianBlur stdDeviation="3.5"/></filter>
<filter id="b3" filterUnits="userSpaceOnUse" x="1880" y="150" width="320" height="320"><feGaussianBlur stdDeviation="6"/></filter>
<filter id="tx" filterUnits="userSpaceOnUse" x="1880" y="150" width="320" height="320"><feTurbulence type="fractalNoise" baseFrequency="0.12" numOctaves="2" seed="3" result="n"/><feColorMatrix in="n" type="matrix" values="0 0 0 0 0.1  0 0 0 0 0.07  0 0 0 0 0.05  0 0 0 1.6 -0.6" result="m"/><feComposite in="m" in2="SourceGraphic" operator="in" result="c"/><feMerge><feMergeNode in="SourceGraphic"/><feMergeNode in="c"/></feMerge></filter>
<linearGradient id="fg" x1="1995" y1="0" x2="2110" y2="0" gradientUnits="userSpaceOnUse"><stop offset="0" stop-color="#fff4da"/><stop offset="0.6" stop-color="#fcecd0"/><stop offset="0.9" stop-color="#efdcc4"/><stop offset="1" stop-color="#d9c2aa"/></linearGradient>
<linearGradient id="ng" x1="1945" y1="0" x2="2105" y2="0" gradientUnits="userSpaceOnUse"><stop offset="0" stop-color="#1a120c"/><stop offset="0.35" stop-color="#b8a08a"/><stop offset="0.6" stop-color="#ead6c0"/><stop offset="0.92" stop-color="#d8c0a8"/><stop offset="1" stop-color="#1a100a"/></linearGradient>
<linearGradient id="hg" x1="2060" y1="0" x2="2140" y2="0" gradientUnits="userSpaceOnUse"><stop offset="0" stop-color="#9a8470"/><stop offset="0.5" stop-color="#6a5848"/><stop offset="1" stop-color="#2a201a"/></linearGradient>
</defs><g filter="url(#b2)"><path d="M1992 240 Q1995 200 2016 186 Q2060 176 2102 196 Q2135 220 2140 262 Q2138 282 2120 285 L2030 250Z" fill="#2e2420"/></g><g filter="url(#b1)"><path d="M2006 214 Q2014 192 2036 190 Q2062 190 2070 200 L2100 290 Q2106 330 2100 360 Q2108 385 2104 400 Q2090 410 2060 412 L2021 409 Q2006 396 2001 365 Q1998 340 1993 322 Q1997 300 1999 272 Q2000 240 2006 214Z" fill="url(#fg)"/></g><g filter="url(#b1)"><path d="M2004 214 Q2010 196 2030 189 Q2050 184 2070 190 L2066 198 Q2048 193 2030 198 Q2014 206 2008 222Z" fill="#4a3a30" opacity=".85"/></g><g filter="url(#b1)"><ellipse cx="1996" cy="322" rx="5" ry="12" fill="#e8d0b8"/></g><g filter="url(#b3)"><path d="M2060 196 Q2100 200 2124 228 Q2140 258 2128 280 Q2112 292 2100 290 Q2085 250 2062 225Z" fill="url(#hg)"/></g><g filter="url(#b2)"><g filter="url(#tx)" opacity="0.5"><path d="M2070 204 Q2100 206 2120 232 Q2130 258 2122 274 Q2108 282 2100 280 Q2086 250 2072 228Z" fill="#7a6a5a"/></g></g><g filter="url(#b1)"><path d="M2027 249 Q2050 252 2078 264" stroke="#5e4c40" stroke-width="5.5" fill="none" stroke-linecap="round"/></g><g filter="url(#b2)"><path d="M2024 290 Q2048 276 2080 288 Q2092 300 2080 314 Q2055 318 2034 304Z" fill="#3a2a22"/></g><g filter="url(#b1)"><path d="M2025 290 Q2045 283 2064 285 Q2078 291 2078 296 Q2070 305 2052 306 Q2037 299 2025 290Z" fill="#2c1c14"/></g><circle cx="2042" cy="293" r="1.3" fill="#cfc6bc"/><g filter="url(#b3)"><ellipse cx="2050" cy="325" rx="16" ry="9" fill="#8a6e5e" opacity=".6"/></g><g filter="url(#b3)"><path d="M2040 316 Q2024 345 2038 368 Q2044 376 2052 379" stroke="#2a1c14" stroke-width="13" fill="none" stroke-linecap="round"/></g><g filter="url(#b2)"><path d="M2036 322 Q2027 347 2039 366 Q2045 374 2051 377" stroke="#3a2a20" stroke-width="6" fill="none" stroke-linecap="round"/></g><g filter="url(#b2)"><ellipse cx="2086" cy="368" rx="9" ry="5" fill="#7a5a4a" opacity=".7"/></g><g filter="url(#b1)"><path d="M2047 380 Q2075 381 2106 386 L2104 398 Q2085 402 2062 392Z" fill="#64221f"/></g><g filter="url(#b1)"><path d="M1946 444 Q1975 430 2000 420 Q2018 412 2024 406 L2100 406 Q2104 425 2104 444Z" fill="url(#ng)"/></g><g filter="url(#b1)"><path d="M2026 410 Q2038 428 2050 444" stroke="#a88c78" stroke-width="2" fill="none"/></g><g filter="url(#b1)"><path d="M2112 282 Q2103 320 2100 360 Q2107 385 2106 400 Q2100 420 2103 444 L2160 444 L2160 270Z" fill="#000"/></g></g></svg>
<div class="t" style="left:733.0px;top:955.0px;font-size:30.52px;color:#f0b400;font-weight:bold;transform:scaleX(0.8660);">00;01;03;01</div>
<div class="a" style="left:733px;top:984px;width:145px;height:2px;background-image:repeating-linear-gradient(90deg,#d9a000 0 2px,transparent 2px 4px);"></div>
<div class="a" style="left:916px;top:959px;width:153px;height:26px;background:#3a3a3a;border:1px solid #1a1a1a;box-shadow:inset 1px 1px 0 #505050;"></div>
<div class="t ui" style="left:927.0px;top:959.6px;font-size:20.35px;color:#bdbdbd;transform:scaleX(1.0524);">Adapter</div>
<div class="a" style="left:1035px;top:964px;width:1px;height:16px;background:#5a5a5a;"></div>
<svg class="a" style="left:1047px;top:968px;" width="13" height="9" viewBox="0 0 13 9"><polygon points="0,0 13,0 6.5,9" fill="#b8b8b8"/></svg>
<div class="a" style="left:3093px;top:959px;width:152px;height:26px;background:#3a3a3a;border:1px solid #1a1a1a;box-shadow:inset 1px 1px 0 #505050;"></div>
<div class="t ui" style="left:3105.0px;top:959.6px;font-size:20.35px;color:#bdbdbd;transform:scaleX(1.0253);">1/2</div>
<div class="a" style="left:3211px;top:964px;width:1px;height:16px;background:#5a5a5a;"></div>
<svg class="a" style="left:3218px;top:968px;" width="13" height="9" viewBox="0 0 13 9"><polygon points="0,0 13,0 6.5,9" fill="#b8b8b8"/></svg>
<svg class="a" style="left:3266px;top:955px;" width="30" height="30" viewBox="0 0 30 30"><path d="M7 4a7 7 0 0 0 7 10l11 11l3 -3l-11 -11a7 7 0 0 0 -10 -7l4 4l-1 4l-4 1z" fill="#d0d0d0"/></svg>
<div class="t" style="left:3321.0px;top:955.2px;font-size:30.52px;color:#dedede;font-weight:bold;transform:scaleX(0.8600);">00;01;50;09</div>
<div class="a" style="left:733px;top:997px;width:2735px;height:39px;background:#343434;border:2px solid #151515;border-bottom:none;"></div>
<svg class="a" style="left:733px;top:997px;" width="2735" height="39" viewBox="0 0 2735 39"><rect x="2.0" y="27" width="1" height="8" fill="#7a7a7a"/><rect x="11.7" y="32" width="1" height="3" fill="#6a6a6a"/><rect x="21.5" y="32" width="1" height="3" fill="#6a6a6a"/><rect x="31.2" y="32" width="1" height="3" fill="#6a6a6a"/><rect x="40.9" y="32" width="1" height="3" fill="#6a6a6a"/><rect x="50.7" y="32" width="1" height="3" fill="#6a6a6a"/><rect x="60.4" y="32" width="1" height="3" fill="#6a6a6a"/><rect x="70.1" y="32" width="1" height="3" fill="#6a6a6a"/><rect x="79.9" y="32" width="1" height="3" fill="#6a6a6a"/><rect x="89.6" y="32" width="1" height="3" fill="#6a6a6a"/><rect x="99.3" y="32" width="1" height="3" fill="#6a6a6a"/><rect x="109.1" y="32" width="1" height="3" fill="#6a6a6a"/><rect x="118.8" y="32" width="1" height="3" fill="#6a6a6a"/><rect x="128.5" y="32" width="1" height="3" fill="#6a6a6a"/><rect x="138.3" y="32" width="1" height="3" fill="#6a6a6a"/><rect x="148.0" y="27" width="1" height="8" fill="#7a7a7a"/><rect x="157.7" y="32" width="1" height="3" fill="#6a6a6a"/><rect x="167.5" y="32" width="1" height="3" fill="#6a6a6a"/><rect x="177.2" y="32" width="1" height="3" fill="#6a6a6a"/><rect x="186.9" y="32" width="1" height="3" fill="#6a6a6a"/><rect x="196.7" y="32" width="1" height="3" fill="#6a6a6a"/><rect x="206.4" y="32" width="1" height="3" fill="#6a6a6a"/><rect x="216.1" y="32" width="1" height="3" fill="#6a6a6a"/><rect x="225.9" y="32" width="1" height="3" fill="#6a6a6a"/><rect x="235.6" y="32" width="1" height="3" fill="#6a6a6a"/><rect x="245.3" y="32" width="1" height="3" fill="#6a6a6a"/><rect x="255.1" y="32" width="1" height="3" fill="#6a6a6a"/><rect x="264.8" y="32" width="1" height="3" fill="#6a6a6a"/><rect x="274.5" y="32" width="1" height="3" fill="#6a6a6a"/><rect x="284.3" y="32" width="1" height="3" fill="#6a6a6a"/><rect x="294.0" y="27" width="1" height="8" fill="#7a7a7a"/><rect x="303.7" y="32" width="1" height="3" fill="#6a6a6a"/><rect x="313.5" y="32" width="1" height="3" fill="#6a6a6a"/><rect x="323.2" y="32" width="1" height="3" fill="#6a6a6a"/><rect x="332.9" y="32" width="1" height="3" fill="#6a6a6a"/><rect x="342.7" y="32" width="1" height="3" fill="#6a6a6a"/><rect x="352.4" y="32" width="1" height="3" fill="#6a6a6a"/><rect x="362.1" y="32" width="1" height="3" fill="#6a6a6a"/><rect x="371.9" y="32" width="1" height="3" fill="#6a6a6a"/><rect x="381.6" y="32" width="1" height="3" fill="#6a6a6a"/><rect x="391.3" y="32" width="1" height="3" fill="#6a6a6a"/><rect x="401.1" y="32" width="1" height="3" fill="#6a6a6a"/><rect x="410.8" y="32" width="1" height="3" fill="#6a6a6a"/><rect x="420.5" y="32" width="1" height="3" fill="#6a6a6a"/><rect x="430.3" y="32" width="1" height="3" fill="#6a6a6a"/><rect x="440.0" y="27" width="1" height="8" fill="#7a7a7a"/><rect x="449.7" y="32" width="1" height="3" fill="#6a6a6a"/><rect x="459.5" y="32" width="1" height="3" fill="#6a6a6a"/><rect x="469.2" y="32" width="1" height="3" fill="#6a6a6a"/><rect x="478.9" y="32" width="1" height="3" fill="#6a6a6a"/><rect x="488.7" y="32" width="1" height="3" fill="#6a6a6a"/><rect x="498.4" y="32" width="1" height="3" fill="#6a6a6a"/><rect x="508.1" y="32" width="1" height="3" fill="#6a6a6a"/><rect x="517.9" y="32" width="1" height="3" fill="#6a6a6a"/><rect x="527.6" y="32" width="1" height="3" fill="#6a6a6a"/><rect x="537.3" y="32" width="1" height="3" fill="#6a6a6a"/><rect x="547.1" y="32" width="1" height="3" fill="#6a6a6a"/><rect x="556.8" y="32" width="1" height="3" fill="#6a6a6a"/><rect x="566.5" y="32" width="1" height="3" fill="#6a6a6a"/><rect x="576.3" y="32" width="1" height="3" fill="#6a6a6a"/><rect x="586.0" y="27" width="1" height="8" fill="#7a7a7a"/><rect x="595.7" y="32" width="1" height="3" fill="#6a6a6a"/><rect x="605.5" y="32" width="1" height="3" fill="#6a6a6a"/><rect x="615.2" y="32" width="1" height="3" fill="#6a6a6a"/><rect x="624.9" y="32" width="1" height="3" fill="#6a6a6a"/><rect x="634.7" y="32" width="1" height="3" fill="#6a6a6a"/><rect x="644.4" y="32" width="1" height="3" fill="#6a6a6a"/><rect x="654.1" y="32" width="1" height="3" fill="#6a6a6a"/><rect x="663.9" y="32" width="1" height="3" fill="#6a6a6a"/><rect x="673.6" y="32" width="1" height="3" fill="#6a6a6a"/><rect x="683.3" y="32" width="1" height="3" fill="#6a6a6a"/><rect x="693.1" y="32" width="1" height="3" fill="#6a6a6a"/><rect x="702.8" y="32" width="1" height="3" fill="#6a6a6a"/><rect x="712.5" y="32" width="1" height="3" fill="#6a6a6a"/><rect x="722.3" y="32" width="1" height="3" fill="#6a6a6a"/><rect x="732.0" y="27" width="1" height="8" fill="#7a7a7a"/><rect x="741.7" y="32" width="1" height="3" fill="#6a6a6a"/><rect x="751.5" y="32" width="1" height="3" fill="#6a6a6a"/><rect x="761.2" y="32" width="1" height="3" fill="#6a6a6a"/><rect x="770.9" y="32" width="1" height="3" fill="#6a6a6a"/><rect x="780.7" y="32" width="1" height="3" fill="#6a6a6a"/><rect x="790.4" y="32" width="1" height="3" fill="#6a6a6a"/><rect x="800.1" y="32" width="1" height="3" fill="#6a6a6a"/><rect x="809.9" y="32" width="1" height="3" fill="#6a6a6a"/><rect x="819.6" y="32" width="1" height="3" fill="#6a6a6a"/><rect x="829.3" y="32" width="1" height="3" fill="#6a6a6a"/><rect x="839.1" y="32" width="1" height="3" fill="#6a6a6a"/><rect x="848.8" y="32" width="1" height="3" fill="#6a6a6a"/><rect x="858.5" y="32" width="1" height="3" fill="#6a6a6a"/><rect x="868.3" y="32" width="1" height="3" fill="#6a6a6a"/><rect x="878.0" y="27" width="1" height="8" fill="#7a7a7a"/><rect x="887.7" y="32" width="1" height="3" fill="#6a6a6a"/><rect x="897.5" y="32" width="1" height="3" fill="#6a6a6a"/><rect x="907.2" y="32" width="1" height="3" fill="#6a6a6a"/><rect x="916.9" y="32" width="1" height="3" fill="#6a6a6a"/><rect x="926.7" y="32" width="1" height="3" fill="#6a6a6a"/><rect x="936.4" y="32" width="1" height="3" fill="#6a6a6a"/><rect x="946.1" y="32" width="1" height="3" fill="#6a6a6a"/><rect x="955.9" y="32" width="1" height="3" fill="#6a6a6a"/><rect x="965.6" y="32" width="1" height="3" fill="#6a6a6a"/><rect x="975.3" y="32" width="1" height="3" fill="#6a6a6a"/><rect x="985.1" y="32" width="1" height="3" fill="#6a6a6a"/><rect x="994.8" y="32" width="1" height="3" fill="#6a6a6a"/><rect x="1004.5" y="32" width="1" height="3" fill="#6a6a6a"/><rect x="1014.3" y="32" width="1" height="3" fill="#6a6a6a"/><rect x="1024.0" y="27" width="1" height="8" fill="#7a7a7a"/><rect x="1033.7" y="32" width="1" height="3" fill="#6a6a6a"/><rect x="1043.5" y="32" width="1" height="3" fill="#6a6a6a"/><rect x="1053.2" y="32" width="1" height="3" fill="#6a6a6a"/><rect x="1062.9" y="32" width="1" height="3" fill="#6a6a6a"/><rect x="1072.7" y="32" width="1" height="3" fill="#6a6a6a"/><rect x="1082.4" y="32" width="1" height="3" fill="#6a6a6a"/><rect x="1092.1" y="32" width="1" height="3" fill="#6a6a6a"/><rect x="1101.9" y="32" width="1" height="3" fill="#6a6a6a"/><rect x="1111.6" y="32" width="1" height="3" fill="#6a6a6a"/><rect x="1121.3" y="32" width="1" height="3" fill="#6a6a6a"/><rect x="1131.1" y="32" width="1" height="3" fill="#6a6a6a"/><rect x="1140.8" y="32" width="1" height="3" fill="#6a6a6a"/><rect x="1150.5" y="32" width="1" height="3" fill="#6a6a6a"/><rect x="1160.3" y="32" width="1" height="3" fill="#6a6a6a"/><rect x="1170.0" y="27" width="1" height="8" fill="#7a7a7a"/><rect x="1179.7" y="32" width="1" height="3" fill="#6a6a6a"/><rect x="1189.5" y="32" width="1" height="3" fill="#6a6a6a"/><rect x="1199.2" y="32" width="1" height="3" fill="#6a6a6a"/><rect x="1208.9" y="32" width="1" height="3" fill="#6a6a6a"/><rect x="1218.7" y="32" width="1" height="3" fill="#6a6a6a"/><rect x="1228.4" y="32" width="1" height="3" fill="#6a6a6a"/><rect x="1238.1" y="32" width="1" height="3" fill="#6a6a6a"/><rect x="1247.9" y="32" width="1" height="3" fill="#6a6a6a"/><rect x="1257.6" y="32" width="1" height="3" fill="#6a6a6a"/><rect x="1267.3" y="32" width="1" height="3" fill="#6a6a6a"/><rect x="1277.1" y="32" width="1" height="3" fill="#6a6a6a"/><rect x="1286.8" y="32" width="1" height="3" fill="#6a6a6a"/><rect x="1296.5" y="32" width="1" height="3" fill="#6a6a6a"/><rect x="1306.3" y="32" width="1" height="3" fill="#6a6a6a"/><rect x="1316.0" y="27" width="1" height="8" fill="#7a7a7a"/><rect x="1325.7" y="32" width="1" height="3" fill="#6a6a6a"/><rect x="1335.5" y="32" width="1" height="3" fill="#6a6a6a"/><rect x="1345.2" y="32" width="1" height="3" fill="#6a6a6a"/><rect x="1354.9" y="32" width="1" height="3" fill="#6a6a6a"/><rect x="1364.7" y="32" width="1" height="3" fill="#6a6a6a"/><rect x="1374.4" y="32" width="1" height="3" fill="#6a6a6a"/><rect x="1384.1" y="32" width="1" height="3" fill="#6a6a6a"/><rect x="1393.9" y="32" width="1" height="3" fill="#6a6a6a"/><rect x="1403.6" y="32" width="1" height="3" fill="#6a6a6a"/><rect x="1413.3" y="32" width="1" height="3" fill="#6a6a6a"/><rect x="1423.1" y="32" width="1" height="3" fill="#6a6a6a"/><rect x="1432.8" y="32" width="1" height="3" fill="#6a6a6a"/><rect x="1442.5" y="32" width="1" height="3" fill="#6a6a6a"/><rect x="1452.3" y="32" width="1" height="3" fill="#6a6a6a"/><rect x="1462.0" y="27" width="1" height="8" fill="#7a7a7a"/><rect x="1471.7" y="32" width="1" height="3" fill="#6a6a6a"/><rect x="1481.5" y="32" width="1" height="3" fill="#6a6a6a"/><rect x="1491.2" y="32" width="1" height="3" fill="#6a6a6a"/><rect x="1500.9" y="32" width="1" height="3" fill="#6a6a6a"/><rect x="1510.7" y="32" width="1" height="3" fill="#6a6a6a"/><rect x="1520.4" y="32" width="1" height="3" fill="#6a6a6a"/><rect x="1530.1" y="32" width="1" height="3" fill="#6a6a6a"/><rect x="1539.9" y="32" width="1" height="3" fill="#6a6a6a"/><rect x="1549.6" y="32" width="1" height="3" fill="#6a6a6a"/><rect x="1559.3" y="32" width="1" height="3" fill="#6a6a6a"/><rect x="1569.1" y="32" width="1" height="3" fill="#6a6a6a"/><rect x="1578.8" y="32" width="1" height="3" fill="#6a6a6a"/><rect x="1588.5" y="32" width="1" height="3" fill="#6a6a6a"/><rect x="1598.3" y="32" width="1" height="3" fill="#6a6a6a"/><rect x="1608.0" y="27" width="1" height="8" fill="#7a7a7a"/><rect x="1617.7" y="32" width="1" height="3" fill="#6a6a6a"/><rect x="1627.5" y="32" width="1" height="3" fill="#6a6a6a"/><rect x="1637.2" y="32" width="1" height="3" fill="#6a6a6a"/><rect x="1646.9" y="32" width="1" height="3" fill="#6a6a6a"/><rect x="1656.7" y="32" width="1" height="3" fill="#6a6a6a"/><rect x="1666.4" y="32" width="1" height="3" fill="#6a6a6a"/><rect x="1676.1" y="32" width="1" height="3" fill="#6a6a6a"/><rect x="1685.9" y="32" width="1" height="3" fill="#6a6a6a"/><rect x="1695.6" y="32" width="1" height="3" fill="#6a6a6a"/><rect x="1705.3" y="32" width="1" height="3" fill="#6a6a6a"/><rect x="1715.1" y="32" width="1" height="3" fill="#6a6a6a"/><rect x="1724.8" y="32" width="1" height="3" fill="#6a6a6a"/><rect x="1734.5" y="32" width="1" height="3" fill="#6a6a6a"/><rect x="1744.3" y="32" width="1" height="3" fill="#6a6a6a"/><rect x="1754.0" y="27" width="1" height="8" fill="#7a7a7a"/><rect x="1763.7" y="32" width="1" height="3" fill="#6a6a6a"/><rect x="1773.5" y="32" width="1" height="3" fill="#6a6a6a"/><rect x="1783.2" y="32" width="1" height="3" fill="#6a6a6a"/><rect x="1792.9" y="32" width="1" height="3" fill="#6a6a6a"/><rect x="1802.7" y="32" width="1" height="3" fill="#6a6a6a"/><rect x="1812.4" y="32" width="1" height="3" fill="#6a6a6a"/><rect x="1822.1" y="32" width="1" height="3" fill="#6a6a6a"/><rect x="1831.9" y="32" width="1" height="3" fill="#6a6a6a"/><rect x="1841.6" y="32" width="1" height="3" fill="#6a6a6a"/><rect x="1851.3" y="32" width="1" height="3" fill="#6a6a6a"/><rect x="1861.1" y="32" width="1" height="3" fill="#6a6a6a"/><rect x="1870.8" y="32" width="1" height="3" fill="#6a6a6a"/><rect x="1880.5" y="32" width="1" height="3" fill="#6a6a6a"/><rect x="1890.3" y="32" width="1" height="3" fill="#6a6a6a"/><rect x="1900.0" y="27" width="1" height="8" fill="#7a7a7a"/><rect x="1909.7" y="32" width="1" height="3" fill="#6a6a6a"/><rect x="1919.5" y="32" width="1" height="3" fill="#6a6a6a"/><rect x="1929.2" y="32" width="1" height="3" fill="#6a6a6a"/><rect x="1938.9" y="32" width="1" height="3" fill="#6a6a6a"/><rect x="1948.7" y="32" width="1" height="3" fill="#6a6a6a"/><rect x="1958.4" y="32" width="1" height="3" fill="#6a6a6a"/><rect x="1968.1" y="32" width="1" height="3" fill="#6a6a6a"/><rect x="1977.9" y="32" width="1" height="3" fill="#6a6a6a"/><rect x="1987.6" y="32" width="1" height="3" fill="#6a6a6a"/><rect x="1997.3" y="32" width="1" height="3" fill="#6a6a6a"/><rect x="2007.1" y="32" width="1" height="3" fill="#6a6a6a"/><rect x="2016.8" y="32" width="1" height="3" fill="#6a6a6a"/><rect x="2026.5" y="32" width="1" height="3" fill="#6a6a6a"/><rect x="2036.3" y="32" width="1" height="3" fill="#6a6a6a"/><rect x="2046.0" y="27" width="1" height="8" fill="#7a7a7a"/><rect x="2055.7" y="32" width="1" height="3" fill="#6a6a6a"/><rect x="2065.5" y="32" width="1" height="3" fill="#6a6a6a"/><rect x="2075.2" y="32" width="1" height="3" fill="#6a6a6a"/><rect x="2084.9" y="32" width="1" height="3" fill="#6a6a6a"/><rect x="2094.7" y="32" width="1" height="3" fill="#6a6a6a"/><rect x="2104.4" y="32" width="1" height="3" fill="#6a6a6a"/><rect x="2114.1" y="32" width="1" height="3" fill="#6a6a6a"/><rect x="2123.9" y="32" width="1" height="3" fill="#6a6a6a"/><rect x="2133.6" y="32" width="1" height="3" fill="#6a6a6a"/><rect x="2143.3" y="32" width="1" height="3" fill="#6a6a6a"/><rect x="2153.1" y="32" width="1" height="3" fill="#6a6a6a"/><rect x="2162.8" y="32" width="1" height="3" fill="#6a6a6a"/><rect x="2172.5" y="32" width="1" height="3" fill="#6a6a6a"/><rect x="2182.3" y="32" width="1" height="3" fill="#6a6a6a"/><rect x="2192.0" y="27" width="1" height="8" fill="#7a7a7a"/><rect x="2201.7" y="32" width="1" height="3" fill="#6a6a6a"/><rect x="2211.5" y="32" width="1" height="3" fill="#6a6a6a"/><rect x="2221.2" y="32" width="1" height="3" fill="#6a6a6a"/><rect x="2230.9" y="32" width="1" height="3" fill="#6a6a6a"/><rect x="2240.7" y="32" width="1" height="3" fill="#6a6a6a"/><rect x="2250.4" y="32" width="1" height="3" fill="#6a6a6a"/><rect x="2260.1" y="32" width="1" height="3" fill="#6a6a6a"/><rect x="2269.9" y="32" width="1" height="3" fill="#6a6a6a"/><rect x="2279.6" y="32" width="1" height="3" fill="#6a6a6a"/><rect x="2289.3" y="32" width="1" height="3" fill="#6a6a6a"/><rect x="2299.1" y="32" width="1" height="3" fill="#6a6a6a"/><rect x="2308.8" y="32" width="1" height="3" fill="#6a6a6a"/><rect x="2318.5" y="32" width="1" height="3" fill="#6a6a6a"/><rect x="2328.3" y="32" width="1" height="3" fill="#6a6a6a"/><rect x="2338.0" y="27" width="1" height="8" fill="#7a7a7a"/><rect x="2347.7" y="32" width="1" height="3" fill="#6a6a6a"/><rect x="2357.5" y="32" width="1" height="3" fill="#6a6a6a"/><rect x="2367.2" y="32" width="1" height="3" fill="#6a6a6a"/><rect x="2376.9" y="32" width="1" height="3" fill="#6a6a6a"/><rect x="2386.7" y="32" width="1" height="3" fill="#6a6a6a"/><rect x="2396.4" y="32" width="1" height="3" fill="#6a6a6a"/><rect x="2406.1" y="32" width="1" height="3" fill="#6a6a6a"/><rect x="2415.9" y="32" width="1" height="3" fill="#6a6a6a"/><rect x="2425.6" y="32" width="1" height="3" fill="#6a6a6a"/><rect x="2435.3" y="32" width="1" height="3" fill="#6a6a6a"/><rect x="2445.1" y="32" width="1" height="3" fill="#6a6a6a"/><rect x="2454.8" y="32" width="1" height="3" fill="#6a6a6a"/><rect x="2464.5" y="32" width="1" height="3" fill="#6a6a6a"/><rect x="2474.3" y="32" width="1" height="3" fill="#6a6a6a"/><rect x="2484.0" y="27" width="1" height="8" fill="#7a7a7a"/><rect x="2493.7" y="32" width="1" height="3" fill="#6a6a6a"/><rect x="2503.5" y="32" width="1" height="3" fill="#6a6a6a"/><rect x="2513.2" y="32" width="1" height="3" fill="#6a6a6a"/><rect x="2522.9" y="32" width="1" height="3" fill="#6a6a6a"/><rect x="2532.7" y="32" width="1" height="3" fill="#6a6a6a"/><rect x="2542.4" y="32" width="1" height="3" fill="#6a6a6a"/><rect x="2552.1" y="32" width="1" height="3" fill="#6a6a6a"/><rect x="2561.9" y="32" width="1" height="3" fill="#6a6a6a"/><rect x="2571.6" y="32" width="1" height="3" fill="#6a6a6a"/><rect x="2581.3" y="32" width="1" height="3" fill="#6a6a6a"/><rect x="2591.1" y="32" width="1" height="3" fill="#6a6a6a"/><rect x="2600.8" y="32" width="1" height="3" fill="#6a6a6a"/><rect x="2610.5" y="32" width="1" height="3" fill="#6a6a6a"/><rect x="2620.3" y="32" width="1" height="3" fill="#6a6a6a"/><rect x="2630.0" y="27" width="1" height="8" fill="#7a7a7a"/><rect x="2639.7" y="32" width="1" height="3" fill="#6a6a6a"/><rect x="2649.5" y="32" width="1" height="3" fill="#6a6a6a"/><rect x="2659.2" y="32" width="1" height="3" fill="#6a6a6a"/><rect x="2668.9" y="32" width="1" height="3" fill="#6a6a6a"/><rect x="2678.7" y="32" width="1" height="3" fill="#6a6a6a"/><rect x="2688.4" y="32" width="1" height="3" fill="#6a6a6a"/><rect x="2698.1" y="32" width="1" height="3" fill="#6a6a6a"/><rect x="2707.9" y="32" width="1" height="3" fill="#6a6a6a"/><rect x="2717.6" y="32" width="1" height="3" fill="#6a6a6a"/><rect x="2727.3" y="32" width="1" height="3" fill="#6a6a6a"/></svg>
<svg class="a" style="left:1011px;top:1009px;" width="20" height="24" viewBox="0 0 20 24"><path d="M1 5Q1 0 10 0Q19 0 19 5L19 10Q19 15 10 22Q1 15 1 10Z" fill="#f0b400"/><rect x="6" y="4" width="1.5" height="5" fill="#5a4000"/><rect x="9.3" y="4" width="1.5" height="5" fill="#5a4000"/><rect x="12.5" y="4" width="1.5" height="5" fill="#5a4000"/><rect x="7" y="11" width="6" height="1.5" fill="#5a4000"/><rect x="9.3" y="11" width="1.5" height="12" fill="#5a4000"/></svg>
<div class="a" style="left:733px;top:1035px;width:2735px;height:25px;background:#2c2c2c;border:2px solid #151515;"></div>
<div class="a" style="left:735px;top:1037px;width:20px;height:21px;background:#505050;"></div>
<svg class="a" style="left:742px;top:1041px;" width="6" height="12" viewBox="0 0 6 12"><rect x="0" y="0" width="2" height="2" fill="#666"/><rect x="4" y="0" width="2" height="2" fill="#666"/><rect x="0" y="4" width="2" height="2" fill="#666"/><rect x="4" y="4" width="2" height="2" fill="#666"/><rect x="0" y="8" width="2" height="2" fill="#666"/><rect x="4" y="8" width="2" height="2" fill="#666"/></svg>
<div class="a" style="left:756px;top:1037px;width:2422px;height:21px;background:#8a8a8a;"></div>
<div class="t ui" style="left:1963.0px;top:1041.9px;font-size:13.08px;color:#444;transform:scaleX(0.8255);">III</div>
<div class="a" style="left:3178px;top:1037px;width:23px;height:21px;background:#4a4a4a;"></div>
<svg class="a" style="left:3186px;top:1041px;" width="6" height="12" viewBox="0 0 6 12"><rect x="0" y="0" width="2" height="2" fill="#777"/><rect x="4" y="0" width="2" height="2" fill="#777"/><rect x="0" y="4" width="2" height="2" fill="#777"/><rect x="4" y="4" width="2" height="2" fill="#777"/><rect x="0" y="8" width="2" height="2" fill="#777"/><rect x="4" y="8" width="2" height="2" fill="#777"/></svg>
<div class="a" style="left:1649.5px;top:1069.5px;width:75px;height:41px;background:linear-gradient(#4a4a4a,#383838);border:2px solid #161616;border-radius:2px;box-shadow:inset 0 1px 0 #585858;"></div>
<svg class="a" style="left:1649.5px;top:1069.5px;" width="75" height="41" viewBox="0 0 75 41"><polygon points="28,10 47,10 47,20 37.5,29 28,20" fill="#cacaca"/></svg>
<div class="a" style="left:1729.5px;top:1069.5px;width:75px;height:41px;background:linear-gradient(#4a4a4a,#383838);border:2px solid #161616;border-radius:2px;box-shadow:inset 0 1px 0 #585858;"></div>
<svg class="a" style="left:1729.5px;top:1069.5px;" width="75" height="41" viewBox="0 0 75 41"><rect x="37" y="5" width="4" height="31" fill="#cacaca"/><path d="M37 16l-6 5l6 5" fill="none" stroke="#cacaca" stroke-width="2"/></svg>
<div class="a" style="left:1809px;top:1069.5px;width:75px;height:41px;background:linear-gradient(#4a4a4a,#383838);border:2px solid #161616;border-radius:2px;box-shadow:inset 0 1px 0 #585858;"></div>
<svg class="a" style="left:1809px;top:1069.5px;" width="75" height="41" viewBox="0 0 75 41"><rect x="34" y="5" width="4" height="31" fill="#cacaca"/><path d="M38 16l6 5l-6 5" fill="none" stroke="#cacaca" stroke-width="2"/></svg>
<div class="a" style="left:1903.5px;top:1069.5px;width:75px;height:41px;background:linear-gradient(#4a4a4a,#383838);border:2px solid #161616;border-radius:2px;box-shadow:inset 0 1px 0 #585858;"></div>
<svg class="a" style="left:1903.5px;top:1069.5px;" width="75" height="41" viewBox="0 0 75 41"><rect x="30" y="5" width="4" height="31" fill="#cacaca"/><path d="M30 16l-5 5l5 5" fill="none" stroke="#cacaca" stroke-width="2"/><polygon points="37,21 44,15 44,18 52,18 52,24 44,24 44,27" fill="#cacaca"/></svg>
<div class="a" style="left:1983.5px;top:1069.5px;width:75px;height:41px;background:linear-gradient(#4a4a4a,#383838);border:2px solid #161616;border-radius:2px;box-shadow:inset 0 1px 0 #585858;"></div>
<svg class="a" style="left:1983.5px;top:1069.5px;" width="75" height="41" viewBox="0 0 75 41"><polygon points="24,21 40,11 40,31" fill="#cacaca"/><rect x="43" y="11" width="5" height="20" fill="#cacaca"/></svg>
<div class="a" style="left:2063.5px;top:1069.5px;width:75px;height:41px;background:linear-gradient(#4a4a4a,#383838);border:2px solid #161616;border-radius:2px;box-shadow:inset 0 1px 0 #585858;"></div>
<svg class="a" style="left:2063.5px;top:1069.5px;" width="75" height="41" viewBox="0 0 75 41"><polygon points="28,10 49,21 28,32" fill="#cacaca"/></svg>
<div class="a" style="left:2143.5px;top:1069.5px;width:75px;height:41px;background:linear-gradient(#4a4a4a,#383838);border:2px solid #161616;border-radius:2px;box-shadow:inset 0 1px 0 #585858;"></div>
<svg class="a" style="left:2143.5px;top:1069.5px;" width="75" height="41" viewBox="0 0 75 41"><rect x="26" y="11" width="5" height="20" fill="#cacaca"/><polygon points="34,11 50,21 34,31" fill="#cacaca"/></svg>
<div class="a" style="left:2223.5px;top:1069.5px;width:75px;height:41px;background:linear-gradient(#4a4a4a,#383838);border:2px solid #161616;border-radius:2px;box-shadow:inset 0 1px 0 #585858;"></div>
<svg class="a" style="left:2223.5px;top:1069.5px;" width="75" height="41" viewBox="0 0 75 41"><rect x="43" y="5" width="4" height="31" fill="#cacaca"/><path d="M47 16l5 5l-5 5" fill="none" stroke="#cacaca" stroke-width="2"/><polygon points="38,21 31,15 31,18 23,18 23,24 31,24 31,27" fill="#cacaca"/></svg>
<div class="a" style="left:2316px;top:1069.5px;width:75px;height:41px;background:linear-gradient(#4a4a4a,#383838);border:2px solid #161616;border-radius:2px;box-shadow:inset 0 1px 0 #585858;"></div>
<svg class="a" style="left:2316px;top:1069.5px;" width="75" height="41" viewBox="0 0 75 41"><rect x="21" y="22" width="13" height="11" fill="#cacaca"/><rect x="41" y="22" width="13" height="11" fill="#cacaca"/><rect x="30" y="9" width="15" height="13" fill="none" stroke="#cacaca" stroke-width="2"/><polygon points="33,19 37.5,13 42,19" fill="#cacaca"/><rect x="30" y="22" width="15" height="3" fill="#cacaca"/></svg>
<div class="a" style="left:2396px;top:1069.5px;width:75px;height:41px;background:linear-gradient(#4a4a4a,#383838);border:2px solid #161616;border-radius:2px;box-shadow:inset 0 1px 0 #585858;"></div>
<svg class="a" style="left:2396px;top:1069.5px;" width="75" height="41" viewBox="0 0 75 41"><rect x="30" y="9" width="15" height="12" fill="none" stroke="#cacaca" stroke-width="2"/><polygon points="33,18 37.5,12 42,18" fill="#cacaca"/><rect x="20" y="23" width="35" height="3" fill="#cacaca"/><polygon points="21,26 27,30 21,34" fill="none" stroke="#cacaca" stroke-width="1.5"/><polygon points="54,26 48,30 54,34" fill="none" stroke="#cacaca" stroke-width="1.5"/></svg>
<div class="a" style="left:2476px;top:1069.5px;width:75px;height:41px;background:linear-gradient(#4a4a4a,#383838);border:2px solid #161616;border-radius:2px;box-shadow:inset 0 1px 0 #585858;"></div>
<svg class="a" style="left:2476px;top:1069.5px;" width="75" height="41" viewBox="0 0 75 41"><rect x="22" y="12" width="31" height="20" rx="2" fill="#cacaca"/><rect x="26" y="9" width="8" height="4" fill="#cacaca"/><circle cx="39" cy="22" r="6" fill="#3c3c3c"/><circle cx="39" cy="22" r="3.5" fill="#cacaca"/></svg>
<div class="a" style="left:2556px;top:1069.5px;width:75px;height:41px;background:linear-gradient(#4a4a4a,#383838);border:2px solid #161616;border-radius:2px;box-shadow:inset 0 1px 0 #585858;"></div>
<svg class="a" style="left:2556px;top:1069.5px;" width="75" height="41" viewBox="0 0 75 41"><path d="M25 15v15h25v-6" fill="none" stroke="#cacaca" stroke-width="3.5"/><path d="M30 22v-5h14" fill="none" stroke="#cacaca" stroke-width="3.5"/><polygon points="43,10 51,17 43,24" fill="#cacaca"/></svg>
<svg class="a" style="left:3432px;top:1087px;" width="24" height="22" viewBox="0 0 24 22"><rect x="9" y="0" width="6" height="22" fill="#d0d0d0"/><rect x="0" y="8" width="24" height="6" fill="#d0d0d0"/></svg>
<div class="a" style="left:4px;top:1129px;width:959px;height:7px;background:#3a3a3a;"></div>
<div class="a" style="left:0px;top:1140px;width:1090px;height:685px;background:#2a2a2a;"></div>
<div class="a" style="left:4px;top:1174px;width:1086px;height:651px;background:#404040;"></div>
<div class="a" style="left:4px;top:1140px;width:424px;height:33px;background:#303030;"></div>
<div class="a" style="left:430px;top:1140px;width:252px;height:33px;background:#303030;"></div>
<div class="a" style="left:684px;top:1140px;width:97px;height:33px;background:#303030;"></div>
<div class="a" style="left:782px;top:1140px;width:102px;height:35px;background:#404040;"></div>
<div class="a" style="left:886px;top:1140px;width:127px;height:33px;background:#303030;"></div>
<div class="a" style="left:1015px;top:1140px;width:36px;height:33px;background:#303030;"></div>
<div class="t ui" style="left:21.0px;top:1146.3px;font-size:20.35px;color:#8a8a8a;transform:scaleX(1.0430);">Projet : Assemblage_videos_pour_holos</div>
<div class="t ui" style="left:449.0px;top:1146.3px;font-size:20.35px;color:#8a8a8a;transform:scaleX(1.0109);">Explorateur de médias</div>
<div class="t ui" style="left:705.0px;top:1146.3px;font-size:20.35px;color:#8a8a8a;transform:scaleX(1.0587);">Infos</div>
<svg class="a" style="left:789px;top:1149px;" width="6" height="18" viewBox="0 0 6 18"><rect x="0" y="0" width="2" height="2" fill="#777"/><rect x="4" y="0" width="2" height="2" fill="#777"/><rect x="0" y="4" width="2" height="2" fill="#777"/><rect x="4" y="4" width="2" height="2" fill="#777"/><rect x="0" y="8" width="2" height="2" fill="#777"/><rect x="4" y="8" width="2" height="2" fill="#777"/><rect x="0" y="12" width="2" height="2" fill="#777"/><rect x="4" y="12" width="2" height="2" fill="#777"/><rect x="0" y="16" width="2" height="2" fill="#777"/><rect x="4" y="16" width="2" height="2" fill="#777"/></svg>
<div class="t ui" style="left:803.0px;top:1146.3px;font-size:20.35px;color:#cfcfcf;transform:scaleX(1.0067);">Effets</div>
<svg class="a" style="left:867px;top:1152px;" width="10" height="10" viewBox="0 0 10 10"><path d="M1 1L9 9M9 1L1 9" stroke="#8a8a8a" stroke-width="1.5"/></svg>
<div class="t ui" style="left:905.0px;top:1146.3px;font-size:20.35px;color:#8a8a8a;transform:scaleX(0.9929);">Marques</div>
<svg class="a" style="left:1029px;top:1149px;" width="26" height="16" viewBox="0 0 26 16"><polygon points="0,3 8,3 4,8" fill="#c8c8c8"/><rect x="10" y="2" width="15" height="2" fill="#c8c8c8"/><rect x="10" y="7" width="15" height="2" fill="#c8c8c8"/><rect x="10" y="12" width="15" height="2" fill="#c8c8c8"/></svg>
<svg class="a" style="left:1076px;top:1148px;" width="6" height="20" viewBox="0 0 6 20"><rect x="0" y="0" width="2" height="2" fill="#555"/><rect x="4" y="0" width="2" height="2" fill="#555"/><rect x="0" y="4" width="2" height="2" fill="#555"/><rect x="4" y="4" width="2" height="2" fill="#555"/><rect x="0" y="8" width="2" height="2" fill="#555"/><rect x="4" y="8" width="2" height="2" fill="#555"/><rect x="0" y="12" width="2" height="2" fill="#555"/><rect x="4" y="12" width="2" height="2" fill="#555"/><rect x="0" y="16" width="2" height="2" fill="#555"/><rect x="4" y="16" width="2" height="2" fill="#555"/></svg>
<div class="a" style="left:11.6px;top:1184.7px;width:374.4px;height:29.5px;background:#a9a9a9;border:2px solid #1c1c1c;"></div>
<svg class="a" style="left:16px;top:1188px;" width="24" height="24" viewBox="0 0 24 24"><circle cx="15" cy="9" r="6.5" fill="none" stroke="#333" stroke-width="2"/><path d="M10 14L2 22" stroke="#333" stroke-width="2.5"/></svg>
<div class="t" style="left:51.4px;top:1188.5px;font-size:21.08px;color:#111;transform:scaleX(0.9047);">courbe de luminance</div>
<div class="a" style="left:363px;top:1190px;width:21px;height:20px;background:#5a5a5a;border-radius:4px;"></div>
<svg class="a" style="left:368px;top:1195px;" width="11" height="11" viewBox="0 0 11 11"><path d="M1 1L10 10M10 1L1 10" stroke="#eee" stroke-width="2"/></svg>
<svg class="a" style="left:407.6px;top:1185px;" width="31.5" height="26" viewBox="0 0 31.5 26"><rect x="0" y="1" width="31.5" height="25" fill="#d4d4d4"/><rect x="0" y="0" width="31.5" height="3" fill="#d4d4d4"/><rect x="0" y="0" width="4" height="4" fill="#1a1a1a"/><rect x="13.8" y="0" width="4" height="4" fill="#1a1a1a"/><rect x="27.5" y="0" width="4" height="4" fill="#1a1a1a"/><rect x="0" y="24" width="31.5" height="2" fill="#9a9a9a"/></svg>
<svg class="a" style="left:407.6px;top:1185px;" width="31.5" height="26" viewBox="0 0 31.5 26"><rect x="6" y="12" width="6" height="2" fill="#1a1a1a"/><rect x="5" y="16" width="6" height="2" fill="#1a1a1a"/><polygon points="15,7 26,14 15,21" fill="#1a1a1a"/></svg>
<svg class="a" style="left:459.5px;top:1185px;" width="32.5" height="26" viewBox="0 0 32.5 26"><rect x="0" y="1" width="32.5" height="25" fill="#d4d4d4"/><rect x="0" y="0" width="32.5" height="3" fill="#d4d4d4"/><rect x="0" y="0" width="4" height="4" fill="#1a1a1a"/><rect x="14.2" y="0" width="4" height="4" fill="#1a1a1a"/><rect x="28.5" y="0" width="4" height="4" fill="#1a1a1a"/><rect x="0" y="24" width="32.5" height="2" fill="#9a9a9a"/><text x="16.25" y="20" text-anchor="middle" font-family="Liberation Sans" font-size="15" fill="#1a1a1a" textLength="23.5" lengthAdjust="spacingAndGlyphs">32</text></svg>
<svg class="a" style="left:512px;top:1185px;" width="33" height="26" viewBox="0 0 33 26"><rect x="0" y="1" width="33" height="25" fill="#d4d4d4"/><rect x="0" y="0" width="33" height="3" fill="#d4d4d4"/><rect x="0" y="0" width="4" height="4" fill="#1a1a1a"/><rect x="14.5" y="0" width="4" height="4" fill="#1a1a1a"/><rect x="29" y="0" width="4" height="4" fill="#1a1a1a"/><rect x="0" y="24" width="33" height="2" fill="#9a9a9a"/><text x="16.5" y="20" text-anchor="middle" font-family="Liberation Sans" font-size="15" fill="#1a1a1a" textLength="24" lengthAdjust="spacingAndGlyphs">YUV</text></svg>
<div class="a" style="left:11.6px;top:1225.5px;width:1068.4px;height:563.5px;background:#3d3d3d;border:1px solid #272727;"></div>
<div class="a" style="left:1059px;top:1226px;width:21px;height:563px;background:#353535;"></div>
<svg class="a" style="left:1063px;top:1232px;" width="13" height="8" viewBox="0 0 13 8"><polygon points="0,8 13,8 6.5,0" fill="#555"/></svg>
<svg class="a" style="left:1063px;top:1774px;" width="13" height="8" viewBox="0 0 13 8"><polygon points="0,0 13,0 6.5,8" fill="#555"/></svg>
<div class="a" style="left:12.6px;top:1264px;width:1046px;height:1px;background:#363636;"></div>
<svg class="a" style="left:22px;top:1240px;" width="12" height="14" viewBox="0 0 12 14"><polygon points="0,0 12,7.0 0,14" fill="#9a9a9a"/></svg>
<svg class="a" style="left:50px;top:1235px;" width="28" height="22" viewBox="0 0 28 22"><defs><linearGradient id="fg501235" x1="0" y1="0" x2="0" y2="1"><stop offset="0" stop-color="#dcdcdc"/><stop offset="1" stop-color="#a8a8a8"/></linearGradient></defs><path d="M0 3h9l3 3h14v15h-26z" fill="url(#fg501235)"/><polygon points="22,0 23.5,4 27.5,4 24.3,6.5 25.5,10.5 22,8 18.5,10.5 19.7,6.5 16.5,4 20.5,4" fill="#f6c400"/></svg>
<div class="t ui" style="left:89.0px;top:1236.7px;font-size:21.08px;color:#c8c8c8;transform:scaleX(0.9878);">Préconfigurations</div>
<div class="a" style="left:12.6px;top:1300px;width:1046px;height:1px;background:#363636;"></div>
<svg class="a" style="left:22px;top:1276px;" width="12" height="14" viewBox="0 0 12 14"><polygon points="0,0 12,7.0 0,14" fill="#9a9a9a"/></svg>
<svg class="a" style="left:50px;top:1271px;" width="28" height="22" viewBox="0 0 28 22"><defs><linearGradient id="fg501271" x1="0" y1="0" x2="0" y2="1"><stop offset="0" stop-color="#dcdcdc"/><stop offset="1" stop-color="#a8a8a8"/></linearGradient></defs><path d="M0 3h9l3 3h14v15h-26z" fill="url(#fg501271)"/></svg>
<div class="t ui" style="left:89.0px;top:1272.7px;font-size:21.08px;color:#c8c8c8;transform:scaleX(1.0007);">Effets audio</div>
<div class="a" style="left:12.6px;top:1336px;width:1046px;height:1px;background:#363636;"></div>
<svg class="a" style="left:22px;top:1312px;" width="12" height="14" viewBox="0 0 12 14"><polygon points="0,0 12,7.0 0,14" fill="#9a9a9a"/></svg>
<svg class="a" style="left:50px;top:1307px;" width="28" height="22" viewBox="0 0 28 22"><defs><linearGradient id="fg501307" x1="0" y1="0" x2="0" y2="1"><stop offset="0" stop-color="#dcdcdc"/><stop offset="1" stop-color="#a8a8a8"/></linearGradient></defs><path d="M0 3h9l3 3h14v15h-26z" fill="url(#fg501307)"/></svg>
<div class="t ui" style="left:89.0px;top:1308.7px;font-size:21.08px;color:#c8c8c8;transform:scaleX(1.0006);">Transitions audio</div>
<div class="a" style="left:12.6px;top:1372px;width:1046px;height:1px;background:#363636;"></div>
<svg class="a" style="left:22px;top:1350px;" width="13" height="11" viewBox="0 0 13 11"><polygon points="0,0 13,0 6.5,11" fill="#9a9a9a"/></svg>
<svg class="a" style="left:50px;top:1343px;" width="28" height="22" viewBox="0 0 28 22"><defs><linearGradient id="fg501343" x1="0" y1="0" x2="0" y2="1"><stop offset="0" stop-color="#dcdcdc"/><stop offset="1" stop-color="#a8a8a8"/></linearGradient></defs><path d="M0 3h9l3 3h14v15h-26z" fill="url(#fg501343)"/></svg>
<div class="t ui" style="left:89.0px;top:1344.7px;font-size:21.08px;color:#c8c8c8;transform:scaleX(1.0115);">Effets vidéo</div>
<div class="a" style="left:12.6px;top:1408px;width:1046px;height:1px;background:#363636;"></div>
<svg class="a" style="left:42px;top:1386px;" width="13" height="11" viewBox="0 0 13 11"><polygon points="0,0 13,0 6.5,11" fill="#9a9a9a"/></svg>
<svg class="a" style="left:70px;top:1379px;" width="28" height="22" viewBox="0 0 28 22"><defs><linearGradient id="fg701379" x1="0" y1="0" x2="0" y2="1"><stop offset="0" stop-color="#dcdcdc"/><stop offset="1" stop-color="#a8a8a8"/></linearGradient></defs><path d="M0 3h9l3 3h14v15h-26z" fill="url(#fg701379)"/></svg>
<div class="t ui" style="left:109.6px;top:1380.7px;font-size:21.08px;color:#c8c8c8;transform:scaleX(0.9957);">Correction colorimétrique</div>
<div class="a" style="left:12.6px;top:1409px;width:1046px;height:36px;background:#4a4a4a;"></div>
<div class="a" style="left:12.6px;top:1444px;width:1046px;height:1px;background:#363636;"></div>
<svg class="a" style="left:93.7px;top:1417px;" width="22" height="20" viewBox="0 0 22 20"><rect x="1" y="3" width="20" height="17" fill="#c8c8c8"/><rect x="3" y="0" width="4" height="4" fill="#c8c8c8"/><rect x="15" y="0" width="4" height="4" fill="#c8c8c8"/><rect x="4" y="8" width="14" height="9" fill="#555"/></svg>
<svg class="a" style="left:526.7px;top:1417px;" width="24" height="21" viewBox="0 0 24 21"><rect x="0" y="1" width="24" height="20" fill="#d4d4d4"/><rect x="0" y="0" width="24" height="3" fill="#d4d4d4"/><rect x="0" y="0" width="4" height="4" fill="#1a1a1a"/><rect x="10.0" y="0" width="4" height="4" fill="#1a1a1a"/><rect x="20" y="0" width="4" height="4" fill="#1a1a1a"/><rect x="0" y="19" width="24" height="2" fill="#9a9a9a"/></svg>
<svg class="a" style="left:526.7px;top:1417px;" width="24" height="21" viewBox="0 0 24 21"><rect x="4" y="9" width="16" height="9" fill="#888" opacity=".5"/></svg>
<svg class="a" style="left:582px;top:1417px;" width="25" height="21" viewBox="0 0 25 21"><rect x="0" y="1" width="25" height="20" fill="#d4d4d4"/><rect x="0" y="0" width="25" height="3" fill="#d4d4d4"/><rect x="0" y="0" width="4" height="4" fill="#1a1a1a"/><rect x="10.5" y="0" width="4" height="4" fill="#1a1a1a"/><rect x="21" y="0" width="4" height="4" fill="#1a1a1a"/><rect x="0" y="19" width="25" height="2" fill="#9a9a9a"/><text x="12.5" y="15" text-anchor="middle" font-family="Liberation Sans" font-size="12" fill="#1a1a1a" textLength="16" lengthAdjust="spacingAndGlyphs">32</text></svg>
<svg class="a" style="left:639px;top:1417px;" width="24" height="21" viewBox="0 0 24 21"><rect x="0" y="1" width="24" height="20" fill="#d4d4d4"/><rect x="0" y="0" width="24" height="3" fill="#d4d4d4"/><rect x="0" y="0" width="4" height="4" fill="#1a1a1a"/><rect x="10.0" y="0" width="4" height="4" fill="#1a1a1a"/><rect x="20" y="0" width="4" height="4" fill="#1a1a1a"/><rect x="0" y="19" width="24" height="2" fill="#9a9a9a"/><text x="12.0" y="15" text-anchor="middle" font-family="Liberation Sans" font-size="11" fill="#1a1a1a" textLength="15" lengthAdjust="spacingAndGlyphs">YUV</text></svg>
<div class="t ui" style="left:127.0px;top:1416.7px;font-size:21.08px;color:#c8c8c8;transform:scaleX(0.9569);">Courbe de luminance</div>
<div class="a" style="left:12.6px;top:1480px;width:1046px;height:1px;background:#363636;"></div>
<svg class="a" style="left:22px;top:1456px;" width="12" height="14" viewBox="0 0 12 14"><polygon points="0,0 12,7.0 0,14" fill="#9a9a9a"/></svg>
<svg class="a" style="left:50px;top:1451px;" width="28" height="22" viewBox="0 0 28 22"><defs><linearGradient id="fg501451" x1="0" y1="0" x2="0" y2="1"><stop offset="0" stop-color="#dcdcdc"/><stop offset="1" stop-color="#a8a8a8"/></linearGradient></defs><path d="M0 3h9l3 3h14v15h-26z" fill="url(#fg501451)"/></svg>
<div class="t ui" style="left:89.0px;top:1452.7px;font-size:21.08px;color:#c8c8c8;transform:scaleX(1.0081);">Transitions vidéo</div>
<div class="a" style="left:12.6px;top:1516px;width:1046px;height:1px;background:#363636;"></div>
<svg class="a" style="left:22px;top:1492px;" width="12" height="14" viewBox="0 0 12 14"><polygon points="0,0 12,7.0 0,14" fill="#9a9a9a"/></svg>
<svg class="a" style="left:50px;top:1487px;" width="28" height="22" viewBox="0 0 28 22"><defs><linearGradient id="fg501487" x1="0" y1="0" x2="0" y2="1"><stop offset="0" stop-color="#e0c080"/><stop offset="1" stop-color="#b89058"/></linearGradient></defs><path d="M0 3h9l3 3h14v15h-26z" fill="url(#fg501487)"/></svg>
<div class="t ui" style="left:89.0px;top:1488.7px;font-size:21.08px;color:#c8c8c8;transform:scaleX(0.9749);">Chutier personnalisé 01</div>
<div class="a" style="left:526px;top:1417px;width:26px;height:22px;background:rgba(64,64,64,0.55);"></div>
<svg class="a" style="left:982px;top:1796px;" width="28" height="22" viewBox="0 0 28 22"><defs><linearGradient id="fg9821796" x1="0" y1="0" x2="0" y2="1"><stop offset="0" stop-color="#d0d0d0"/><stop offset="1" stop-color="#a0a0a0"/></linearGradient></defs><path d="M0 3h9l3 3h14v15h-26z" fill="url(#fg9821796)"/><polygon points="22,0 23.5,4 27.5,4 24.3,6.5 25.5,10.5 22,8 18.5,10.5 19.7,6.5 16.5,4 20.5,4" fill="#f6c400"/></svg>
<svg class="a" style="left:1027px;top:1796px;" width="22" height="22" viewBox="0 0 22 22"><rect x="3" y="6" width="16" height="16" fill="#4a4a4a"/><rect x="1" y="3" width="20" height="3" fill="#4a4a4a"/><rect x="8" y="0" width="6" height="3" fill="#4a4a4a"/></svg>
<div class="a" style="left:1096px;top:1129px;width:79px;height:696px;background:#3f3f3f;border:1px solid #2a2a2a;"></div>
<svg class="a" style="left:1111px;top:1136px;" width="32" height="6" viewBox="0 0 32 6"><rect x="0" y="0" width="2" height="2" fill="#777"/><rect x="0" y="3" width="2" height="2" fill="#777"/><rect x="3" y="0" width="2" height="2" fill="#777"/><rect x="3" y="3" width="2" height="2" fill="#777"/><rect x="6" y="0" width="2" height="2" fill="#777"/><rect x="6" y="3" width="2" height="2" fill="#777"/><rect x="9" y="0" width="2" height="2" fill="#777"/><rect x="9" y="3" width="2" height="2" fill="#777"/><rect x="12" y="0" width="2" height="2" fill="#777"/><rect x="12" y="3" width="2" height="2" fill="#777"/><rect x="15" y="0" width="2" height="2" fill="#777"/><rect x="15" y="3" width="2" height="2" fill="#777"/><rect x="18" y="0" width="2" height="2" fill="#777"/><rect x="18" y="3" width="2" height="2" fill="#777"/><rect x="21" y="0" width="2" height="2" fill="#777"/><rect x="21" y="3" width="2" height="2" fill="#777"/><rect x="24" y="0" width="2" height="2" fill="#777"/><rect x="24" y="3" width="2" height="2" fill="#777"/><rect x="27" y="0" width="2" height="2" fill="#777"/><rect x="27" y="3" width="2" height="2" fill="#777"/><rect x="30" y="0" width="2" height="2" fill="#777"/><rect x="30" y="3" width="2" height="2" fill="#777"/></svg>
<div class="a" style="left:1107.5px;top:1154px;width:41.5px;height:34px;background:#262626;border:1px solid #1a1a1a;"></div>
<svg class="a" style="left:1109.0px;top:1157.0px;" width="36" height="30" viewBox="0 0 36 30"><polygon points="13,3 13,25 18,20 22,28 25,27 21,19 28,19" fill="#c0c0c0"/></svg>
<svg class="a" style="left:1109.0px;top:1193.0px;" width="36" height="30" viewBox="0 0 36 30"><rect x="2.5" y="6.5" width="31" height="18" fill="none" stroke="#c0c0c0" stroke-width="2" stroke-dasharray="4 3"/><polygon points="10,13 20,13 20,9 28,15.5 20,22 20,18 10,18" fill="#c0c0c0"/></svg>
<svg class="a" style="left:1109.0px;top:1230.0px;" width="36" height="30" viewBox="0 0 36 30"><rect x="16" y="3" width="4" height="24" fill="#c0c0c0"/><polygon points="2,15 12,8 12,22" fill="#c0c0c0"/><polygon points="34,15 24,8 24,22" fill="#c0c0c0"/></svg>
<svg class="a" style="left:1109.0px;top:1269.0px;" width="36" height="30" viewBox="0 0 36 30"><rect x="16" y="2" width="4" height="26" fill="#c0c0c0"/><polygon points="2,9 12,4 12,14" fill="#c0c0c0"/><polygon points="34,9 24,4 24,14" fill="#c0c0c0"/><polygon points="2,21 12,16 12,26" fill="#c0c0c0"/><polygon points="34,21 24,16 24,26" fill="#c0c0c0"/></svg>
<svg class="a" style="left:1109.0px;top:1307.0px;" width="36" height="30" viewBox="0 0 36 30"><path d="M17 3v10l5 8v7" stroke="#c0c0c0" stroke-width="3" fill="none"/><polygon points="2,8 12,3 12,13" fill="#c0c0c0"/><polygon points="34,22 24,17 24,27" fill="#c0c0c0"/></svg>
<svg class="a" style="left:1109.0px;top:1345.0px;" width="36" height="30" viewBox="0 0 36 30"><path d="M8 4v10l12 14l10 -10l-12 -8z" fill="#c0c0c0"/><rect x="15" y="14" width="2" height="2" fill="#333"/><rect x="19" y="17" width="2" height="2" fill="#333"/></svg>
<svg class="a" style="left:1109.0px;top:1381.0px;" width="36" height="30" viewBox="0 0 36 30"><rect x="2" y="4" width="3" height="22" fill="#c0c0c0"/><rect x="31" y="4" width="3" height="22" fill="#c0c0c0"/><polygon points="6,15 13,10 13,20" fill="#c0c0c0"/><polygon points="30,15 23,10 23,20" fill="#c0c0c0"/><rect x="12" y="13.5" width="12" height="3" fill="#c0c0c0"/></svg>
<svg class="a" style="left:1109.0px;top:1419.0px;" width="36" height="30" viewBox="0 0 36 30"><rect x="11.5" y="6.5" width="13" height="17" fill="none" stroke="#c0c0c0" stroke-width="2.5"/><polygon points="2,15 11,9 11,21" fill="#c0c0c0"/><polygon points="34,15 25,9 25,21" fill="#c0c0c0"/><rect x="10" y="13.5" width="16" height="3" fill="#c0c0c0"/></svg>
<svg class="a" style="left:1109.0px;top:1457.0px;" width="36" height="30" viewBox="0 0 36 30"><path d="M4 28l4 -12l12 -10l8 8l-10 12z" fill="#c0c0c0"/><rect x="22" y="1" width="9" height="8" transform="rotate(45 26 5)" fill="#c0c0c0"/><circle cx="13" cy="19" r="2" fill="#333"/></svg>
<svg class="a" style="left:1109.0px;top:1497.0px;" width="36" height="30" viewBox="0 0 36 30"><path d="M8 16V8a2 2 0 0 1 4 0v5V4a2 2 0 0 1 4 0v9V3a2 2 0 0 1 4 0v10V6a2 2 0 0 1 4 0v14l3 -4a2 2 0 0 1 3 2l-5 10h-14l-6 -8a2 2 0 0 1 3 -2z" fill="#c0c0c0"/></svg>
<svg class="a" style="left:1109.0px;top:1534.0px;" width="36" height="30" viewBox="0 0 36 30"><circle cx="14" cy="12" r="9" fill="#777" stroke="#c0c0c0" stroke-width="3"/><path d="M20 18l9 9" stroke="#c0c0c0" stroke-width="5"/></svg>
<div class="a" style="left:1181px;top:1129px;width:2128px;height:696px;background:#2b2b2b;"></div>
<div class="a" style="left:1182px;top:1163px;width:2126px;height:662px;background:#3c3c3c;"></div>
<div class="a" style="left:1182px;top:1163px;width:2126px;height:664px;border:2px solid #e0a020;border-top:none;"></div>
<div class="a" style="left:1342px;top:1163px;width:1966px;height:2px;background:#e0a020;"></div>
<div class="a" style="left:1182px;top:1129px;width:160px;height:36px;background:#3c3c3c;border:2px solid #e0a020;border-bottom:none;"></div>
<svg class="a" style="left:1190px;top:1137px;" width="6" height="18" viewBox="0 0 6 18"><rect x="0" y="0" width="2" height="2" fill="#777"/><rect x="4" y="0" width="2" height="2" fill="#777"/><rect x="0" y="4" width="2" height="2" fill="#777"/><rect x="4" y="4" width="2" height="2" fill="#777"/><rect x="0" y="8" width="2" height="2" fill="#777"/><rect x="4" y="8" width="2" height="2" fill="#777"/><rect x="0" y="12" width="2" height="2" fill="#777"/><rect x="4" y="12" width="2" height="2" fill="#777"/><rect x="0" y="16" width="2" height="2" fill="#777"/><rect x="4" y="16" width="2" height="2" fill="#777"/></svg>
<div class="t ui" style="left:1203.0px;top:1135.8px;font-size:20.35px;color:#c8c8c8;transform:scaleX(0.9256);">Séquence 01</div>
<svg class="a" style="left:1326px;top:1142px;" width="9" height="9" viewBox="0 0 9 9"><path d="M1 1L8 8M8 1L1 8" stroke="#8a8a8a" stroke-width="1.5"/></svg>
<svg class="a" style="left:3250px;top:1136px;" width="26" height="16" viewBox="0 0 26 16"><polygon points="0,3 8,3 4,8" fill="#c8c8c8"/><rect x="10" y="2" width="15" height="2" fill="#c8c8c8"/><rect x="10" y="7" width="15" height="2" fill="#c8c8c8"/><rect x="10" y="12" width="15" height="2" fill="#c8c8c8"/></svg>
<svg class="a" style="left:3296px;top:1134px;" width="6" height="26" viewBox="0 0 6 26"><rect x="0" y="0" width="2" height="2" fill="#555"/><rect x="4" y="0" width="2" height="2" fill="#555"/><rect x="0" y="4" width="2" height="2" fill="#555"/><rect x="4" y="4" width="2" height="2" fill="#555"/><rect x="0" y="8" width="2" height="2" fill="#555"/><rect x="4" y="8" width="2" height="2" fill="#555"/><rect x="0" y="12" width="2" height="2" fill="#555"/><rect x="4" y="12" width="2" height="2" fill="#555"/><rect x="0" y="16" width="2" height="2" fill="#555"/><rect x="4" y="16" width="2" height="2" fill="#555"/><rect x="0" y="20" width="2" height="2" fill="#555"/><rect x="4" y="20" width="2" height="2" fill="#555"/><rect x="0" y="24" width="2" height="2" fill="#555"/><rect x="4" y="24" width="2" height="2" fill="#555"/></svg>
<div class="a" style="left:3284px;top:1129px;width:2px;height:34px;background:#1c1c1c;"></div>
<div class="t" style="left:1243.7px;top:1188.4px;font-size:29.07px;color:#f0b400;font-weight:bold;transform:scaleX(0.9156);">00;01;03;01</div>
<div class="a" style="left:1244px;top:1217px;width:146px;height:2px;background-image:repeating-linear-gradient(90deg,#d9a000 0 2px,transparent 2px 4px);"></div>
<div class="a" style="left:1357.7px;top:1247px;width:32px;height:32px;background:#222;border:1px solid #111;"></div>
<svg class="a" style="left:1360px;top:1250px;" width="28" height="26" viewBox="0 0 28 26"><path d="M18 6h-8a7 7 0 0 0 0 14h8" fill="none" stroke="#cfcfcf" stroke-width="4"/><rect x="17" y="4" width="6" height="5" fill="#cfcfcf"/><rect x="17" y="17" width="6" height="5" fill="#cfcfcf"/></svg>
<svg class="a" style="left:1406px;top:1249px;" width="24" height="28" viewBox="0 0 24 28"><circle cx="12" cy="11" r="9" fill="#bdbdbd"/><circle cx="12" cy="11" r="5" fill="#8a8a8a"/><polygon points="7,21 17,21 12,27" fill="#bdbdbd"/></svg>
<svg class="a" style="left:1452px;top:1252px;" width="16" height="20" viewBox="0 0 16 20"><polygon points="1,1 15,1 15,12 8,19 1,12" fill="#bdbdbd"/></svg>
<div class="a" style="left:1488px;top:1203px;width:1790px;height:56px;background:#2e2e2e;border:1px solid #1e1e1e;"></div>
<div class="t ui" style="left:1494.6px;top:1207.8px;font-size:20.35px;color:#c4c4c4;transform:scaleX(0.9624);">00;00</div>
<div class="t ui" style="left:1582.0px;top:1207.8px;font-size:20.35px;color:#c4c4c4;transform:scaleX(0.9862);">00;00;16;00</div>
<div class="t ui" style="left:1726.7px;top:1207.8px;font-size:20.35px;color:#c4c4c4;transform:scaleX(0.9862);">00;00;32;00</div>
<div class="t ui" style="left:1872.0px;top:1207.8px;font-size:20.35px;color:#c4c4c4;transform:scaleX(0.9862);">00;00;48;00</div>
<div class="t ui" style="left:2017.0px;top:1207.8px;font-size:20.35px;color:#c4c4c4;transform:scaleX(0.9862);">00;01;04;02</div>
<div class="t ui" style="left:2162.0px;top:1207.8px;font-size:20.35px;color:#c4c4c4;transform:scaleX(0.9862);">00;01;20;02</div>
<div class="t ui" style="left:2307.0px;top:1207.8px;font-size:20.35px;color:#c4c4c4;transform:scaleX(0.9862);">00;01;36;02</div>
<div class="t ui" style="left:2452.0px;top:1207.8px;font-size:20.35px;color:#c4c4c4;transform:scaleX(0.9862);">00;01;52;02</div>
<div class="t ui" style="left:2596.8px;top:1207.8px;font-size:20.35px;color:#c4c4c4;transform:scaleX(0.9862);">00;02;08;04</div>
<div class="t ui" style="left:2742.0px;top:1207.8px;font-size:20.35px;color:#c4c4c4;transform:scaleX(0.9862);">00;02;24;04</div>
<div class="t ui" style="left:2887.0px;top:1207.8px;font-size:20.35px;color:#c4c4c4;transform:scaleX(0.9862);">00;02;40;04</div>
<div class="t ui" style="left:3032.0px;top:1207.8px;font-size:20.35px;color:#c4c4c4;transform:scaleX(0.9862);">00;02;56;04</div>
<div class="t ui" style="left:3177.0px;top:1207.8px;font-size:20.35px;color:#c4c4c4;transform:scaleX(1.0034);">00;03;12;0</div>
<svg class="a" style="left:1488px;top:1203px;" width="1790" height="56" viewBox="0 0 1790 56"><rect x="0.0" y="38" width="1.5" height="16" fill="#8a8a8a"/><rect x="9.7" y="49" width="1.5" height="5" fill="#5e5e5e"/><rect x="19.4" y="49" width="1.5" height="5" fill="#5e5e5e"/><rect x="29.0" y="47" width="1.5" height="7" fill="#5e5e5e"/><rect x="38.7" y="49" width="1.5" height="5" fill="#5e5e5e"/><rect x="48.4" y="49" width="1.5" height="5" fill="#5e5e5e"/><rect x="58.1" y="47" width="1.5" height="7" fill="#5e5e5e"/><rect x="67.8" y="49" width="1.5" height="5" fill="#5e5e5e"/><rect x="77.4" y="49" width="1.5" height="5" fill="#5e5e5e"/><rect x="87.1" y="47" width="1.5" height="7" fill="#5e5e5e"/><rect x="96.8" y="49" width="1.5" height="5" fill="#5e5e5e"/><rect x="106.5" y="49" width="1.5" height="5" fill="#5e5e5e"/><rect x="116.2" y="47" width="1.5" height="7" fill="#5e5e5e"/><rect x="125.8" y="49" width="1.5" height="5" fill="#5e5e5e"/><rect x="135.5" y="49" width="1.5" height="5" fill="#5e5e5e"/><rect x="145.2" y="38" width="1.5" height="16" fill="#8a8a8a"/><rect x="154.9" y="49" width="1.5" height="5" fill="#5e5e5e"/><rect x="164.6" y="49" width="1.5" height="5" fill="#5e5e5e"/><rect x="174.2" y="47" width="1.5" height="7" fill="#5e5e5e"/><rect x="183.9" y="49" width="1.5" height="5" fill="#5e5e5e"/><rect x="193.6" y="49" width="1.5" height="5" fill="#5e5e5e"/><rect x="203.3" y="47" width="1.5" height="7" fill="#5e5e5e"/><rect x="213.0" y="49" width="1.5" height="5" fill="#5e5e5e"/><rect x="222.6" y="49" width="1.5" height="5" fill="#5e5e5e"/><rect x="232.3" y="47" width="1.5" height="7" fill="#5e5e5e"/><rect x="242.0" y="49" width="1.5" height="5" fill="#5e5e5e"/><rect x="251.7" y="49" width="1.5" height="5" fill="#5e5e5e"/><rect x="261.4" y="47" width="1.5" height="7" fill="#5e5e5e"/><rect x="271.0" y="49" width="1.5" height="5" fill="#5e5e5e"/><rect x="280.7" y="49" width="1.5" height="5" fill="#5e5e5e"/><rect x="290.4" y="38" width="1.5" height="16" fill="#8a8a8a"/><rect x="300.1" y="49" width="1.5" height="5" fill="#5e5e5e"/><rect x="309.8" y="49" width="1.5" height="5" fill="#5e5e5e"/><rect x="319.4" y="47" width="1.5" height="7" fill="#5e5e5e"/><rect x="329.1" y="49" width="1.5" height="5" fill="#5e5e5e"/><rect x="338.8" y="49" width="1.5" height="5" fill="#5e5e5e"/><rect x="348.5" y="47" width="1.5" height="7" fill="#5e5e5e"/><rect x="358.2" y="49" width="1.5" height="5" fill="#5e5e5e"/><rect x="367.8" y="49" width="1.5" height="5" fill="#5e5e5e"/><rect x="377.5" y="47" width="1.5" height="7" fill="#5e5e5e"/><rect x="387.2" y="49" width="1.5" height="5" fill="#5e5e5e"/><rect x="396.9" y="49" width="1.5" height="5" fill="#5e5e5e"/><rect x="406.6" y="47" width="1.5" height="7" fill="#5e5e5e"/><rect x="416.2" y="49" width="1.5" height="5" fill="#5e5e5e"/><rect x="425.9" y="49" width="1.5" height="5" fill="#5e5e5e"/><rect x="435.6" y="38" width="1.5" height="16" fill="#8a8a8a"/><rect x="445.3" y="49" width="1.5" height="5" fill="#5e5e5e"/><rect x="455.0" y="49" width="1.5" height="5" fill="#5e5e5e"/><rect x="464.6" y="47" width="1.5" height="7" fill="#5e5e5e"/><rect x="474.3" y="49" width="1.5" height="5" fill="#5e5e5e"/><rect x="484.0" y="49" width="1.5" height="5" fill="#5e5e5e"/><rect x="493.7" y="47" width="1.5" height="7" fill="#5e5e5e"/><rect x="503.4" y="49" width="1.5" height="5" fill="#5e5e5e"/><rect x="513.0" y="49" width="1.5" height="5" fill="#5e5e5e"/><rect x="522.7" y="47" width="1.5" height="7" fill="#5e5e5e"/><rect x="532.4" y="49" width="1.5" height="5" fill="#5e5e5e"/><rect x="542.1" y="49" width="1.5" height="5" fill="#5e5e5e"/><rect x="551.8" y="47" width="1.5" height="7" fill="#5e5e5e"/><rect x="561.4" y="49" width="1.5" height="5" fill="#5e5e5e"/><rect x="571.1" y="49" width="1.5" height="5" fill="#5e5e5e"/><rect x="580.8" y="38" width="1.5" height="16" fill="#8a8a8a"/><rect x="590.5" y="49" width="1.5" height="5" fill="#5e5e5e"/><rect x="600.2" y="49" width="1.5" height="5" fill="#5e5e5e"/><rect x="609.8" y="47" width="1.5" height="7" fill="#5e5e5e"/><rect x="619.5" y="49" width="1.5" height="5" fill="#5e5e5e"/><rect x="629.2" y="49" width="1.5" height="5" fill="#5e5e5e"/><rect x="638.9" y="47" width="1.5" height="7" fill="#5e5e5e"/><rect x="648.6" y="49" width="1.5" height="5" fill="#5e5e5e"/><rect x="658.2" y="49" width="1.5" height="5" fill="#5e5e5e"/><rect x="667.9" y="47" width="1.5" height="7" fill="#5e5e5e"/><rect x="677.6" y="49" width="1.5" height="5" fill="#5e5e5e"/><rect x="687.3" y="49" width="1.5" height="5" fill="#5e5e5e"/><rect x="697.0" y="47" width="1.5" height="7" fill="#5e5e5e"/><rect x="706.6" y="49" width="1.5" height="5" fill="#5e5e5e"/><rect x="716.3" y="49" width="1.5" height="5" fill="#5e5e5e"/><rect x="726.0" y="38" width="1.5" height="16" fill="#8a8a8a"/><rect x="735.7" y="49" width="1.5" height="5" fill="#5e5e5e"/><rect x="745.4" y="49" width="1.5" height="5" fill="#5e5e5e"/><rect x="755.0" y="47" width="1.5" height="7" fill="#5e5e5e"/><rect x="764.7" y="49" width="1.5" height="5" fill="#5e5e5e"/><rect x="774.4" y="49" width="1.5" height="5" fill="#5e5e5e"/><rect x="784.1" y="47" width="1.5" height="7" fill="#5e5e5e"/><rect x="793.8" y="49" width="1.5" height="5" fill="#5e5e5e"/><rect x="803.4" y="49" width="1.5" height="5" fill="#5e5e5e"/><rect x="813.1" y="47" width="1.5" height="7" fill="#5e5e5e"/><rect x="822.8" y="49" width="1.5" height="5" fill="#5e5e5e"/><rect x="832.5" y="49" width="1.5" height="5" fill="#5e5e5e"/><rect x="842.2" y="47" width="1.5" height="7" fill="#5e5e5e"/><rect x="851.8" y="49" width="1.5" height="5" fill="#5e5e5e"/><rect x="861.5" y="49" width="1.5" height="5" fill="#5e5e5e"/><rect x="871.2" y="38" width="1.5" height="16" fill="#8a8a8a"/><rect x="880.9" y="49" width="1.5" height="5" fill="#5e5e5e"/><rect x="890.6" y="49" width="1.5" height="5" fill="#5e5e5e"/><rect x="900.2" y="47" width="1.5" height="7" fill="#5e5e5e"/><rect x="909.9" y="49" width="1.5" height="5" fill="#5e5e5e"/><rect x="919.6" y="49" width="1.5" height="5" fill="#5e5e5e"/><rect x="929.3" y="47" width="1.5" height="7" fill="#5e5e5e"/><rect x="939.0" y="49" width="1.5" height="5" fill="#5e5e5e"/><rect x="948.6" y="49" width="1.5" height="5" fill="#5e5e5e"/><rect x="958.3" y="47" width="1.5" height="7" fill="#5e5e5e"/><rect x="968.0" y="49" width="1.5" height="5" fill="#5e5e5e"/><rect x="977.7" y="49" width="1.5" height="5" fill="#5e5e5e"/><rect x="987.4" y="47" width="1.5" height="7" fill="#5e5e5e"/><rect x="997.0" y="49" width="1.5" height="5" fill="#5e5e5e"/><rect x="1006.7" y="49" width="1.5" height="5" fill="#5e5e5e"/><rect x="1016.4" y="38" width="1.5" height="16" fill="#8a8a8a"/><rect x="1026.1" y="49" width="1.5" height="5" fill="#5e5e5e"/><rect x="1035.8" y="49" width="1.5" height="5" fill="#5e5e5e"/><rect x="1045.4" y="47" width="1.5" height="7" fill="#5e5e5e"/><rect x="1055.1" y="49" width="1.5" height="5" fill="#5e5e5e"/><rect x="1064.8" y="49" width="1.5" height="5" fill="#5e5e5e"/><rect x="1074.5" y="47" width="1.5" height="7" fill="#5e5e5e"/><rect x="1084.2" y="49" width="1.5" height="5" fill="#5e5e5e"/><rect x="1093.8" y="49" width="1.5" height="5" fill="#5e5e5e"/><rect x="1103.5" y="47" width="1.5" height="7" fill="#5e5e5e"/><rect x="1113.2" y="49" width="1.5" height="5" fill="#5e5e5e"/><rect x="1122.9" y="49" width="1.5" height="5" fill="#5e5e5e"/><rect x="1132.6" y="47" width="1.5" height="7" fill="#5e5e5e"/><rect x="1142.2" y="49" width="1.5" height="5" fill="#5e5e5e"/><rect x="1151.9" y="49" width="1.5" height="5" fill="#5e5e5e"/><rect x="1161.6" y="38" width="1.5" height="16" fill="#8a8a8a"/><rect x="1171.3" y="49" width="1.5" height="5" fill="#5e5e5e"/><rect x="1181.0" y="49" width="1.5" height="5" fill="#5e5e5e"/><rect x="1190.6" y="47" width="1.5" height="7" fill="#5e5e5e"/><rect x="1200.3" y="49" width="1.5" height="5" fill="#5e5e5e"/><rect x="1210.0" y="49" width="1.5" height="5" fill="#5e5e5e"/><rect x="1219.7" y="47" width="1.5" height="7" fill="#5e5e5e"/><rect x="1229.4" y="49" width="1.5" height="5" fill="#5e5e5e"/><rect x="1239.0" y="49" width="1.5" height="5" fill="#5e5e5e"/><rect x="1248.7" y="47" width="1.5" height="7" fill="#5e5e5e"/><rect x="1258.4" y="49" width="1.5" height="5" fill="#5e5e5e"/><rect x="1268.1" y="49" width="1.5" height="5" fill="#5e5e5e"/><rect x="1277.8" y="47" width="1.5" height="7" fill="#5e5e5e"/><rect x="1287.4" y="49" width="1.5" height="5" fill="#5e5e5e"/><rect x="1297.1" y="49" width="1.5" height="5" fill="#5e5e5e"/><rect x="1306.8" y="38" width="1.5" height="16" fill="#8a8a8a"/><rect x="1316.5" y="49" width="1.5" height="5" fill="#5e5e5e"/><rect x="1326.2" y="49" width="1.5" height="5" fill="#5e5e5e"/><rect x="1335.8" y="47" width="1.5" height="7" fill="#5e5e5e"/><rect x="1345.5" y="49" width="1.5" height="5" fill="#5e5e5e"/><rect x="1355.2" y="49" width="1.5" height="5" fill="#5e5e5e"/><rect x="1364.9" y="47" width="1.5" height="7" fill="#5e5e5e"/><rect x="1374.6" y="49" width="1.5" height="5" fill="#5e5e5e"/><rect x="1384.2" y="49" width="1.5" height="5" fill="#5e5e5e"/><rect x="1393.9" y="47" width="1.5" height="7" fill="#5e5e5e"/><rect x="1403.6" y="49" width="1.5" height="5" fill="#5e5e5e"/><rect x="1413.3" y="49" width="1.5" height="5" fill="#5e5e5e"/><rect x="1423.0" y="47" width="1.5" height="7" fill="#5e5e5e"/><rect x="1432.6" y="49" width="1.5" height="5" fill="#5e5e5e"/><rect x="1442.3" y="49" width="1.5" height="5" fill="#5e5e5e"/><rect x="1452.0" y="38" width="1.5" height="16" fill="#8a8a8a"/><rect x="1461.7" y="49" width="1.5" height="5" fill="#5e5e5e"/><rect x="1471.4" y="49" width="1.5" height="5" fill="#5e5e5e"/><rect x="1481.0" y="47" width="1.5" height="7" fill="#5e5e5e"/><rect x="1490.7" y="49" width="1.5" height="5" fill="#5e5e5e"/><rect x="1500.4" y="49" width="1.5" height="5" fill="#5e5e5e"/><rect x="1510.1" y="47" width="1.5" height="7" fill="#5e5e5e"/><rect x="1519.8" y="49" width="1.5" height="5" fill="#5e5e5e"/><rect x="1529.4" y="49" width="1.5" height="5" fill="#5e5e5e"/><rect x="1539.1" y="47" width="1.5" height="7" fill="#5e5e5e"/><rect x="1548.8" y="49" width="1.5" height="5" fill="#5e5e5e"/><rect x="1558.5" y="49" width="1.5" height="5" fill="#5e5e5e"/><rect x="1568.2" y="47" width="1.5" height="7" fill="#5e5e5e"/><rect x="1577.8" y="49" width="1.5" height="5" fill="#5e5e5e"/><rect x="1587.5" y="49" width="1.5" height="5" fill="#5e5e5e"/><rect x="1597.2" y="38" width="1.5" height="16" fill="#8a8a8a"/><rect x="1606.9" y="49" width="1.5" height="5" fill="#5e5e5e"/><rect x="1616.6" y="49" width="1.5" height="5" fill="#5e5e5e"/><rect x="1626.2" y="47" width="1.5" height="7" fill="#5e5e5e"/><rect x="1635.9" y="49" width="1.5" height="5" fill="#5e5e5e"/><rect x="1645.6" y="49" width="1.5" height="5" fill="#5e5e5e"/><rect x="1655.3" y="47" width="1.5" height="7" fill="#5e5e5e"/><rect x="1665.0" y="49" width="1.5" height="5" fill="#5e5e5e"/><rect x="1674.6" y="49" width="1.5" height="5" fill="#5e5e5e"/><rect x="1684.3" y="47" width="1.5" height="7" fill="#5e5e5e"/><rect x="1694.0" y="49" width="1.5" height="5" fill="#5e5e5e"/><rect x="1703.7" y="49" width="1.5" height="5" fill="#5e5e5e"/><rect x="1713.4" y="47" width="1.5" height="7" fill="#5e5e5e"/><rect x="1723.0" y="49" width="1.5" height="5" fill="#5e5e5e"/><rect x="1732.7" y="49" width="1.5" height="5" fill="#5e5e5e"/><rect x="1742.4" y="38" width="1.5" height="16" fill="#8a8a8a"/><rect x="1752.1" y="49" width="1.5" height="5" fill="#5e5e5e"/><rect x="1761.8" y="49" width="1.5" height="5" fill="#5e5e5e"/><rect x="1771.4" y="47" width="1.5" height="7" fill="#5e5e5e"/><rect x="1781.1" y="49" width="1.5" height="5" fill="#5e5e5e"/></svg>
<div class="a" style="left:1616px;top:1205px;width:1px;height:53px;background:#8a8a8a;"></div>
<div class="a" style="left:1488px;top:1258px;width:1790px;height:28px;background:#2e2e2e;border-bottom:1px solid #1e1e1e;"></div>
<div class="a" style="left:1490px;top:1259px;width:1000px;height:24px;background:#8c8c8c;"></div>
<div class="a" style="left:1488px;top:1283px;width:1002px;height:2px;background:#151515;"></div>
<div class="a" style="left:1484px;top:1259px;width:6px;height:24px;background:#f5a000;border-radius:3px 3px 0 0;"></div>
<div class="t ui" style="left:1985.0px;top:1264.9px;font-size:13.08px;color:#444;transform:scaleX(0.8255);">III</div>
<div class="a" style="left:1490px;top:1285px;width:1000px;height:4px;background:#f02a1a;"></div>
<div class="a" style="left:1191px;top:1289px;width:2087px;height:506px;background:#3a3a3a;"></div>
<div class="a" style="left:1191px;top:1289px;width:297px;height:506px;background:#383838;"></div>
<div class="a" style="left:1192px;top:1289px;width:58px;height:506px;background:#353535;"></div>
<div class="a" style="left:1191px;top:1289px;width:2087px;height:31px;background:#383838;"></div>
<div class="a" style="left:1191px;top:1319px;width:2087px;height:1px;background:#2c2c2c;"></div>
<div class="a" style="left:1191px;top:1363px;width:2087px;height:2px;background:#2e2e2e;"></div>
<svg class="a" style="left:1264px;top:1330px;" width="26" height="22" viewBox="0 0 26 22"><rect x="0" y="0" width="26" height="22" fill="#3a3a3a" opacity=".4"/><path d="M2 11Q13 1 24 11Q13 21 2 11Z" fill="none" stroke="#c8c8c8" stroke-width="2"/><circle cx="13" cy="11" r="4" fill="#c8c8c8"/></svg>
<svg class="a" style="left:1297px;top:1330px;" width="22" height="22" viewBox="0 0 22 22"><rect x="2" y="2" width="13" height="7" fill="none" stroke="#c8c8c8" stroke-width="2"/><rect x="2" y="12" width="13" height="7" fill="none" stroke="#c8c8c8" stroke-width="2"/><rect x="15" y="5" width="5" height="12" fill="#c8c8c8"/></svg>
<div class="a" style="left:1330px;top:1329px;width:26px;height:26px;background:rgba(0,0,0,0.07);border:1px solid rgba(0,0,0,0.22);"></div>
<svg class="a" style="left:1362px;top:1334px;" width="11" height="14" viewBox="0 0 11 14"><polygon points="0,0 11,7.0 0,14" fill="#c0c0c0"/></svg>
<div class="t ui" style="left:1386.5px;top:1330.8px;font-size:20.35px;color:#c8c8c8;transform:scaleX(1.0271);">Vidéo 4</div>
<div class="a" style="left:1490px;top:1321px;width:998px;height:43px;background:#729ad4;"></div>
<div class="a" style="left:1490px;top:1361px;width:998px;height:2px;background:#a040d0;"></div>
<div class="a" style="left:1490px;top:1321px;width:998px;height:1px;background:#c8d8f0;"></div>
<div class="t ui" style="left:1496.0px;top:1331.8px;font-size:20.35px;color:#101828;transform:scaleX(0.9602);">MVI_7599.MOV</div>
<div class="a" style="left:1191px;top:1409px;width:2087px;height:2px;background:#2e2e2e;"></div>
<svg class="a" style="left:1264px;top:1375px;" width="26" height="22" viewBox="0 0 26 22"><rect x="0" y="0" width="26" height="22" fill="#3a3a3a" opacity=".4"/><path d="M2 11Q13 1 24 11Q13 21 2 11Z" fill="none" stroke="#c8c8c8" stroke-width="2"/><circle cx="13" cy="11" r="4" fill="#c8c8c8"/></svg>
<svg class="a" style="left:1297px;top:1375px;" width="22" height="22" viewBox="0 0 22 22"><rect x="2" y="2" width="13" height="7" fill="none" stroke="#c8c8c8" stroke-width="2"/><rect x="2" y="12" width="13" height="7" fill="none" stroke="#c8c8c8" stroke-width="2"/><rect x="15" y="5" width="5" height="12" fill="#c8c8c8"/></svg>
<div class="a" style="left:1330px;top:1374px;width:26px;height:26px;background:rgba(0,0,0,0.07);border:1px solid rgba(0,0,0,0.22);"></div>
<svg class="a" style="left:1362px;top:1379px;" width="11" height="14" viewBox="0 0 11 14"><polygon points="0,0 11,7.0 0,14" fill="#c0c0c0"/></svg>
<div class="t ui" style="left:1386.5px;top:1375.8px;font-size:20.35px;color:#c8c8c8;transform:scaleX(1.0271);">Vidéo 3</div>
<div class="a" style="left:1490px;top:1366px;width:998px;height:44px;background:#3a5070;"></div>
<div class="a" style="left:1490px;top:1407px;width:998px;height:2px;background:#40b040;"></div>
<div class="a" style="left:1490px;top:1366px;width:998px;height:1px;background:#8098b8;"></div>
<div class="t ui" style="left:1496.0px;top:1376.8px;font-size:20.35px;color:#dde6f5;transform:scaleX(0.9602);">MVI_7599.MOV</div>
<div class="a" style="left:1191px;top:1454px;width:2087px;height:2px;background:#2e2e2e;"></div>
<svg class="a" style="left:1264px;top:1422px;" width="26" height="22" viewBox="0 0 26 22"><rect x="0" y="0" width="26" height="22" fill="#3a3a3a" opacity=".4"/><path d="M2 11Q13 1 24 11Q13 21 2 11Z" fill="none" stroke="#c8c8c8" stroke-width="2"/><circle cx="13" cy="11" r="4" fill="#c8c8c8"/></svg>
<svg class="a" style="left:1297px;top:1422px;" width="22" height="22" viewBox="0 0 22 22"><rect x="2" y="2" width="13" height="7" fill="none" stroke="#c8c8c8" stroke-width="2"/><rect x="2" y="12" width="13" height="7" fill="none" stroke="#c8c8c8" stroke-width="2"/><rect x="15" y="5" width="5" height="12" fill="#c8c8c8"/></svg>
<div class="a" style="left:1330px;top:1421px;width:26px;height:26px;background:rgba(0,0,0,0.07);border:1px solid rgba(0,0,0,0.22);"></div>
<svg class="a" style="left:1362px;top:1426px;" width="11" height="14" viewBox="0 0 11 14"><polygon points="0,0 11,7.0 0,14" fill="#c0c0c0"/></svg>
<div class="t ui" style="left:1386.5px;top:1422.8px;font-size:20.35px;color:#c8c8c8;transform:scaleX(1.0271);">Vidéo 2</div>
<div class="a" style="left:1490px;top:1413px;width:998px;height:42px;background:#729ad4;"></div>
<div class="a" style="left:1490px;top:1452px;width:998px;height:2px;background:#a040d0;"></div>
<div class="a" style="left:1490px;top:1413px;width:998px;height:1px;background:#c8d8f0;"></div>
<div class="t ui" style="left:1496.0px;top:1423.8px;font-size:20.35px;color:#101828;transform:scaleX(0.9698);">MVI_7599.MOV [V]</div>
<div class="a" style="left:1496px;top:1445px;width:141px;height:2px;background:#101828;"></div>
<div class="a" style="left:1191px;top:1535px;width:2087px;height:2px;background:#2e2e2e;"></div>
<div class="a" style="left:1250px;top:1457px;width:238px;height:79px;background:#5c5c5c;"></div>
<svg class="a" style="left:1264px;top:1467px;" width="26" height="22" viewBox="0 0 26 22"><rect x="0" y="0" width="26" height="22" fill="#3a3a3a" opacity=".4"/><path d="M2 11Q13 1 24 11Q13 21 2 11Z" fill="none" stroke="#c8c8c8" stroke-width="2"/><circle cx="13" cy="11" r="4" fill="#c8c8c8"/></svg>
<svg class="a" style="left:1297px;top:1467px;" width="22" height="22" viewBox="0 0 22 22"><rect x="2" y="2" width="13" height="7" fill="none" stroke="#c8c8c8" stroke-width="2"/><rect x="2" y="12" width="13" height="7" fill="none" stroke="#c8c8c8" stroke-width="2"/><rect x="15" y="5" width="5" height="12" fill="#c8c8c8"/></svg>
<div class="a" style="left:1330px;top:1466px;width:26px;height:26px;background:rgba(0,0,0,0.07);border:1px solid rgba(0,0,0,0.22);"></div>
<svg class="a" style="left:1360px;top:1472px;" width="14" height="11" viewBox="0 0 14 11"><polygon points="0,0 14,0 7.0,11" fill="#c0c0c0"/></svg>
<div class="t ui" style="left:1386.5px;top:1467.8px;font-size:20.35px;color:#c8c8c8;transform:scaleX(1.0271);">Vidéo 1</div>
<div class="a" style="left:1490px;top:1457px;width:998px;height:26px;background:#729ad4;"></div>
<div class="a" style="left:1490px;top:1483px;width:998px;height:2px;background:#a040d0;"></div>
<div class="a" style="left:1490px;top:1485px;width:998px;height:51px;background:#a8c0e6;"></div>
<svg class="a" style="left:1492px;top:1486px;" width="90" height="51" viewBox="0 0 90 51"><defs><linearGradient id="thg" x1="0" y1="0" x2="1" y2="0"><stop offset="0" stop-color="#c8845a"/><stop offset=".55" stop-color="#9a6444"/><stop offset="1" stop-color="#140c08"/></linearGradient><filter id="thb" filterUnits="userSpaceOnUse" x="0" y="0" width="90" height="51"><feGaussianBlur stdDeviation="1.3"/></filter></defs><rect width="90" height="51" fill="#040404"/><g filter="url(#thb)"><ellipse cx="35" cy="24" rx="10" ry="19" fill="url(#thg)"/><path d="M10 51Q22 42 32 41L46 41L50 51Z" fill="#7a4a30"/><ellipse cx="35" cy="21" rx="4" ry="2.5" fill="#241208"/><ellipse cx="38" cy="31" rx="5" ry="2" fill="#3a1a10"/></g></svg>
<div class="a" style="left:1490px;top:1497px;width:998px;height:3px;background:#f0b818;"></div>
<div class="t ui" style="left:1496.0px;top:1459.8px;font-size:20.35px;color:#142038;transform:scaleX(0.8995);">MVI_7599.MO</div>
<svg class="a" style="left:1264px;top:1502px;" width="24" height="24" viewBox="0 0 24 24"><rect x="2" y="3" width="18" height="16" fill="#bdbdbd"/><rect x="5" y="6" width="12" height="10" fill="#777"/><polygon points="17,22 22,22 22,17" fill="#ddd"/></svg>
<svg class="a" style="left:1296px;top:1502px;" width="24" height="24" viewBox="0 0 24 24"><polygon points="10,3 17,10 10,17 3,10" fill="none" stroke="#c8c8c8" stroke-width="2"/><polygon points="17,22 22,22 22,17" fill="#ddd"/></svg>
<div class="a" style="left:1326px;top:1500px;width:100px;height:27px;background:#6a6a6a;border-radius:10px;opacity:.8;"></div>
<svg class="a" style="left:1326px;top:1500px;" width="100" height="27" viewBox="0 0 100 27"><path d="M20 8l-6 6l6 6M80 8l6 6l-6 6" fill="none" stroke="#888" stroke-width="2"/><polygon points="46,10 54,10 50,17" fill="#888"/></svg>
<div class="a" style="left:1191px;top:1587px;width:2087px;height:2px;background:#2e2e2e;"></div>
<div class="a" style="left:1250px;top:1546px;width:238px;height:42px;background:#5c5c5c;"></div>
<svg class="a" style="left:1264px;top:1556px;" width="26" height="24" viewBox="0 0 26 24"><polygon points="3,8 8,8 14,3 14,21 8,16 3,16" fill="#c8c8c8"/><path d="M17 8q3 4 0 8M20 5q5 7 0 14" fill="none" stroke="#c8c8c8" stroke-width="1.6"/></svg>
<svg class="a" style="left:1297px;top:1556px;" width="22" height="22" viewBox="0 0 22 22"><rect x="2" y="2" width="13" height="7" fill="none" stroke="#c8c8c8" stroke-width="2"/><rect x="2" y="12" width="13" height="7" fill="none" stroke="#c8c8c8" stroke-width="2"/><rect x="15" y="5" width="5" height="12" fill="#c8c8c8"/></svg>
<div class="a" style="left:1330px;top:1555px;width:26px;height:26px;background:rgba(0,0,0,0.07);border:1px solid rgba(0,0,0,0.22);"></div>
<svg class="a" style="left:1362px;top:1560px;" width="11" height="14" viewBox="0 0 11 14"><polygon points="0,0 11,7.0 0,14" fill="#c0c0c0"/></svg>
<div class="t ui" style="left:1386.5px;top:1556.8px;font-size:20.35px;color:#c8c8c8;transform:scaleX(1.0216);">Audio 1</div>
<div class="a" style="left:1490px;top:1547px;width:998px;height:41px;background:#729ad4;"></div>
<div class="t ui" style="left:1496.0px;top:1557.8px;font-size:20.35px;color:#101828;transform:scaleX(0.8995);">MVI_7599.MO</div>
<div class="a" style="left:1496px;top:1579px;width:118px;height:2px;background:#101828;"></div>
<div class="a" style="left:1191px;top:1632px;width:2087px;height:2px;background:#2e2e2e;"></div>
<svg class="a" style="left:1264px;top:1599px;" width="26" height="24" viewBox="0 0 26 24"><polygon points="3,8 8,8 14,3 14,21 8,16 3,16" fill="#c8c8c8"/><path d="M17 8q3 4 0 8M20 5q5 7 0 14" fill="none" stroke="#c8c8c8" stroke-width="1.6"/></svg>
<svg class="a" style="left:1297px;top:1599px;" width="22" height="22" viewBox="0 0 22 22"><rect x="2" y="2" width="13" height="7" fill="none" stroke="#c8c8c8" stroke-width="2"/><rect x="2" y="12" width="13" height="7" fill="none" stroke="#c8c8c8" stroke-width="2"/><rect x="15" y="5" width="5" height="12" fill="#c8c8c8"/></svg>
<div class="a" style="left:1330px;top:1598px;width:26px;height:26px;background:rgba(0,0,0,0.07);border:1px solid rgba(0,0,0,0.22);"></div>
<svg class="a" style="left:1362px;top:1603px;" width="11" height="14" viewBox="0 0 11 14"><polygon points="0,0 11,7.0 0,14" fill="#c0c0c0"/></svg>
<div class="t ui" style="left:1386.5px;top:1599.8px;font-size:20.35px;color:#c8c8c8;transform:scaleX(1.0216);">Audio 2</div>
<div class="a" style="left:1191px;top:1678px;width:2087px;height:2px;background:#2e2e2e;"></div>
<svg class="a" style="left:1264px;top:1645px;" width="26" height="24" viewBox="0 0 26 24"><polygon points="3,8 8,8 14,3 14,21 8,16 3,16" fill="#c8c8c8"/><path d="M17 8q3 4 0 8M20 5q5 7 0 14" fill="none" stroke="#c8c8c8" stroke-width="1.6"/></svg>
<svg class="a" style="left:1297px;top:1645px;" width="22" height="22" viewBox="0 0 22 22"><rect x="2" y="2" width="13" height="7" fill="none" stroke="#c8c8c8" stroke-width="2"/><rect x="2" y="12" width="13" height="7" fill="none" stroke="#c8c8c8" stroke-width="2"/><rect x="15" y="5" width="5" height="12" fill="#c8c8c8"/></svg>
<div class="a" style="left:1330px;top:1644px;width:26px;height:26px;background:rgba(0,0,0,0.07);border:1px solid rgba(0,0,0,0.22);"></div>
<svg class="a" style="left:1362px;top:1649px;" width="11" height="14" viewBox="0 0 11 14"><polygon points="0,0 11,7.0 0,14" fill="#c0c0c0"/></svg>
<div class="t ui" style="left:1386.5px;top:1645.8px;font-size:20.35px;color:#c8c8c8;transform:scaleX(1.0216);">Audio 3</div>
<div class="a" style="left:1191px;top:1723px;width:2087px;height:2px;background:#2e2e2e;"></div>
<svg class="a" style="left:1264px;top:1690px;" width="26" height="24" viewBox="0 0 26 24"><polygon points="3,8 8,8 14,3 14,21 8,16 3,16" fill="#c8c8c8"/><path d="M17 8q3 4 0 8M20 5q5 7 0 14" fill="none" stroke="#c8c8c8" stroke-width="1.6"/></svg>
<svg class="a" style="left:1297px;top:1690px;" width="22" height="22" viewBox="0 0 22 22"><rect x="2" y="2" width="13" height="7" fill="none" stroke="#c8c8c8" stroke-width="2"/><rect x="2" y="12" width="13" height="7" fill="none" stroke="#c8c8c8" stroke-width="2"/><rect x="15" y="5" width="5" height="12" fill="#c8c8c8"/></svg>
<div class="a" style="left:1330px;top:1689px;width:26px;height:26px;background:rgba(0,0,0,0.07);border:1px solid rgba(0,0,0,0.22);"></div>
<svg class="a" style="left:1362px;top:1694px;" width="11" height="14" viewBox="0 0 11 14"><polygon points="0,0 11,7.0 0,14" fill="#c0c0c0"/></svg>
<div class="t ui" style="left:1386.5px;top:1690.8px;font-size:20.35px;color:#c8c8c8;transform:scaleX(1.0216);">Audio 4</div>
<div class="a" style="left:1191px;top:1768px;width:2087px;height:2px;background:#2e2e2e;"></div>
<div class="a" style="left:1330px;top:1735px;width:26px;height:26px;background:rgba(0,0,0,0.07);border:1px solid rgba(0,0,0,0.22);"></div>
<svg class="a" style="left:1362px;top:1740px;" width="11" height="14" viewBox="0 0 11 14"><polygon points="0,0 11,7.0 0,14" fill="#c0c0c0"/></svg>
<div class="t ui" style="left:1386.5px;top:1736.8px;font-size:20.35px;color:#c8c8c8;transform:scaleX(1.0423);">Princ...</div>
<svg class="a" style="left:1465px;top:1734px;" width="18" height="10" viewBox="0 0 18 10"><polygon points="0,0 7,5 0,10" fill="#c8c8c8"/><polygon points="18,0 11,5 18,10" fill="#c8c8c8"/><rect x="0" y="0" width="2" height="10" fill="#c8c8c8"/><rect x="16" y="0" width="2" height="10" fill="#c8c8c8"/></svg>
<div class="a" style="left:1191px;top:1537px;width:2087px;height:8px;background:#414141;border-top:1px solid #1e1e1e;border-bottom:1px solid #262626;"></div>
<div class="a" style="left:2060px;top:1257px;width:2px;height:536px;background:#e03a20;"></div>
<svg class="a" style="left:2051px;top:1234px;" width="20" height="24" viewBox="0 0 20 24"><path d="M1 5Q1 0 10 0Q19 0 19 5L19 10Q19 15 10 22Q1 15 1 10Z" fill="#f0b400"/><rect x="6" y="4" width="1.5" height="5" fill="#5a4000"/><rect x="9.3" y="4" width="1.5" height="5" fill="#5a4000"/><rect x="12.5" y="4" width="1.5" height="5" fill="#5a4000"/><rect x="7" y="11" width="6" height="1.5" fill="#5a4000"/><rect x="9.3" y="11" width="1.5" height="12" fill="#5a4000"/></svg>
<svg class="a" style="left:2489px;top:1259px;" width="11" height="26" viewBox="0 0 11 26"><polygon points="0,0 11,8 11,26 0,26" fill="#f5a000"/></svg>
<div class="a" style="left:1616px;top:1461px;width:235px;height:150px;background:#ffffe1;border:1px solid #8a8a8a;"></div>
<div class="t" style="left:1621.0px;top:1469.6px;font-size:28.34px;color:#111;transform:scaleX(0.8580);">MVI_7599.MOV</div>
<div class="t" style="left:1621.0px;top:1505.6px;font-size:28.34px;color:#111;transform:scaleX(0.9038);">Début : 00;00;00;00</div>
<div class="t" style="left:1621.0px;top:1541.6px;font-size:28.34px;color:#111;transform:scaleX(0.8697);">Fin : 00;01;50;08</div>
<div class="t" style="left:1621.0px;top:1577.6px;font-size:28.34px;color:#111;transform:scaleX(0.8901);">Durée : 00;01;50;09</div>
<div class="a" style="left:3277px;top:1289px;width:23px;height:248px;background:#353535;border:1px solid #262626;"></div>
<svg class="a" style="left:3282px;top:1298px;" width="13" height="8" viewBox="0 0 13 8"><polygon points="0,8 13,8 6.5,0" fill="#b0b0b0"/></svg>
<svg class="a" style="left:3282px;top:1522px;" width="13" height="8" viewBox="0 0 13 8"><polygon points="0,0 13,0 6.5,8" fill="#b0b0b0"/></svg>
<div class="a" style="left:3278px;top:1312px;width:21px;height:198px;background:#3a3a3a;border:2px solid #141414;"></div>
<div class="a" style="left:3277px;top:1546px;width:23px;height:248px;background:#353535;border:1px solid #262626;"></div>
<svg class="a" style="left:3282px;top:1555px;" width="13" height="8" viewBox="0 0 13 8"><polygon points="0,8 13,8 6.5,0" fill="#b0b0b0"/></svg>
<svg class="a" style="left:3282px;top:1776px;" width="13" height="8" viewBox="0 0 13 8"><polygon points="0,0 13,0 6.5,8" fill="#b0b0b0"/></svg>
<div class="a" style="left:3278px;top:1568px;width:21px;height:180px;background:#3a3a3a;border:2px solid #141414;"></div>
<div class="a" style="left:1191px;top:1793px;width:2109px;height:24px;background:#2c2c2c;border:2px solid #141414;"></div>
<div class="a" style="left:1193px;top:1795px;width:22px;height:19px;background:#3a3a3a;"></div>
<div class="a" style="left:1215px;top:1795px;width:1005px;height:19px;background:#8c8c8c;"></div>
<div class="a" style="left:2220px;top:1795px;width:22px;height:19px;background:#4a4a4a;"></div>
<div class="t ui" style="left:1712.0px;top:1798.9px;font-size:13.08px;color:#3a3a3a;transform:scaleX(0.8255);">III</div>
<div class="a" style="left:3317px;top:1129px;width:162px;height:696px;background:#3c3c3c;border:1px solid #2a2a2a;"></div>
<svg class="a" style="left:3376px;top:1137px;" width="32" height="6" viewBox="0 0 32 6"><rect x="0" y="0" width="2" height="2" fill="#777"/><rect x="0" y="3" width="2" height="2" fill="#777"/><rect x="3" y="0" width="2" height="2" fill="#777"/><rect x="3" y="3" width="2" height="2" fill="#777"/><rect x="6" y="0" width="2" height="2" fill="#777"/><rect x="6" y="3" width="2" height="2" fill="#777"/><rect x="9" y="0" width="2" height="2" fill="#777"/><rect x="9" y="3" width="2" height="2" fill="#777"/><rect x="12" y="0" width="2" height="2" fill="#777"/><rect x="12" y="3" width="2" height="2" fill="#777"/><rect x="15" y="0" width="2" height="2" fill="#777"/><rect x="15" y="3" width="2" height="2" fill="#777"/><rect x="18" y="0" width="2" height="2" fill="#777"/><rect x="18" y="3" width="2" height="2" fill="#777"/><rect x="21" y="0" width="2" height="2" fill="#777"/><rect x="21" y="3" width="2" height="2" fill="#777"/><rect x="24" y="0" width="2" height="2" fill="#777"/><rect x="24" y="3" width="2" height="2" fill="#777"/><rect x="27" y="0" width="2" height="2" fill="#777"/><rect x="27" y="3" width="2" height="2" fill="#777"/><rect x="30" y="0" width="2" height="2" fill="#777"/><rect x="30" y="3" width="2" height="2" fill="#777"/></svg>
<div class="a" style="left:3323px;top:1157px;width:105px;height:624px;background:#000;border:1px solid #2a2a2a;"></div>
<div class="a" style="left:3323px;top:1172px;width:105px;height:1px;background:#555;"></div>
<div class="a" style="left:3375px;top:1157px;width:1px;height:16px;background:#555;"></div>
<div class="a" style="left:3324px;top:1778px;width:50px;height:2px;background:#d8c020;"></div>
<div class="a" style="left:3377px;top:1778px;width:50px;height:2px;background:#d8c020;"></div>
<svg class="a" style="left:3429px;top:1157px;" width="10" height="630" viewBox="0 0 10 630"><rect x="0" y="18.0" width="6" height="1" fill="#888"/><rect x="2" y="23.0" width="3" height="1" fill="#888"/><rect x="2" y="27.9" width="3" height="1" fill="#888"/><rect x="2" y="32.9" width="3" height="1" fill="#888"/><rect x="2" y="37.8" width="3" height="1" fill="#888"/><rect x="2" y="42.8" width="3" height="1" fill="#888"/><rect x="2" y="47.8" width="3" height="1" fill="#888"/><rect x="2" y="52.7" width="3" height="1" fill="#888"/><rect x="2" y="57.7" width="3" height="1" fill="#888"/><rect x="2" y="62.6" width="3" height="1" fill="#888"/><rect x="2" y="67.6" width="3" height="1" fill="#888"/><rect x="2" y="72.5" width="3" height="1" fill="#888"/><rect x="0" y="77.5" width="6" height="1" fill="#888"/><rect x="2" y="82.5" width="3" height="1" fill="#888"/><rect x="2" y="87.4" width="3" height="1" fill="#888"/><rect x="2" y="92.4" width="3" height="1" fill="#888"/><rect x="2" y="97.3" width="3" height="1" fill="#888"/><rect x="2" y="102.3" width="3" height="1" fill="#888"/><rect x="2" y="107.2" width="3" height="1" fill="#888"/><rect x="2" y="112.2" width="3" height="1" fill="#888"/><rect x="2" y="117.2" width="3" height="1" fill="#888"/><rect x="2" y="122.1" width="3" height="1" fill="#888"/><rect x="2" y="127.1" width="3" height="1" fill="#888"/><rect x="2" y="132.0" width="3" height="1" fill="#888"/><rect x="0" y="137.0" width="6" height="1" fill="#888"/><rect x="2" y="142.0" width="3" height="1" fill="#888"/><rect x="2" y="146.9" width="3" height="1" fill="#888"/><rect x="2" y="151.9" width="3" height="1" fill="#888"/><rect x="2" y="156.8" width="3" height="1" fill="#888"/><rect x="2" y="161.8" width="3" height="1" fill="#888"/><rect x="2" y="166.8" width="3" height="1" fill="#888"/><rect x="2" y="171.7" width="3" height="1" fill="#888"/><rect x="2" y="176.7" width="3" height="1" fill="#888"/><rect x="2" y="181.6" width="3" height="1" fill="#888"/><rect x="2" y="186.6" width="3" height="1" fill="#888"/><rect x="2" y="191.5" width="3" height="1" fill="#888"/><rect x="0" y="196.5" width="6" height="1" fill="#888"/><rect x="2" y="201.5" width="3" height="1" fill="#888"/><rect x="2" y="206.4" width="3" height="1" fill="#888"/><rect x="2" y="211.4" width="3" height="1" fill="#888"/><rect x="2" y="216.3" width="3" height="1" fill="#888"/><rect x="2" y="221.3" width="3" height="1" fill="#888"/><rect x="2" y="226.2" width="3" height="1" fill="#888"/><rect x="2" y="231.2" width="3" height="1" fill="#888"/><rect x="2" y="236.2" width="3" height="1" fill="#888"/><rect x="2" y="241.1" width="3" height="1" fill="#888"/><rect x="2" y="246.1" width="3" height="1" fill="#888"/><rect x="2" y="251.0" width="3" height="1" fill="#888"/><rect x="0" y="256.0" width="6" height="1" fill="#888"/><rect x="2" y="261.0" width="3" height="1" fill="#888"/><rect x="2" y="265.9" width="3" height="1" fill="#888"/><rect x="2" y="270.9" width="3" height="1" fill="#888"/><rect x="2" y="275.8" width="3" height="1" fill="#888"/><rect x="2" y="280.8" width="3" height="1" fill="#888"/><rect x="2" y="285.8" width="3" height="1" fill="#888"/><rect x="2" y="290.7" width="3" height="1" fill="#888"/><rect x="2" y="295.7" width="3" height="1" fill="#888"/><rect x="2" y="300.6" width="3" height="1" fill="#888"/><rect x="2" y="305.6" width="3" height="1" fill="#888"/><rect x="2" y="310.5" width="3" height="1" fill="#888"/><rect x="0" y="315.5" width="6" height="1" fill="#888"/><rect x="2" y="320.5" width="3" height="1" fill="#888"/><rect x="2" y="325.4" width="3" height="1" fill="#888"/><rect x="2" y="330.4" width="3" height="1" fill="#888"/><rect x="2" y="335.3" width="3" height="1" fill="#888"/><rect x="2" y="340.3" width="3" height="1" fill="#888"/><rect x="2" y="345.2" width="3" height="1" fill="#888"/><rect x="2" y="350.2" width="3" height="1" fill="#888"/><rect x="2" y="355.2" width="3" height="1" fill="#888"/><rect x="2" y="360.1" width="3" height="1" fill="#888"/><rect x="2" y="365.1" width="3" height="1" fill="#888"/><rect x="2" y="370.0" width="3" height="1" fill="#888"/><rect x="0" y="375.0" width="6" height="1" fill="#888"/><rect x="2" y="380.0" width="3" height="1" fill="#888"/><rect x="2" y="384.9" width="3" height="1" fill="#888"/><rect x="2" y="389.9" width="3" height="1" fill="#888"/><rect x="2" y="394.8" width="3" height="1" fill="#888"/><rect x="2" y="399.8" width="3" height="1" fill="#888"/><rect x="2" y="404.8" width="3" height="1" fill="#888"/><rect x="2" y="409.7" width="3" height="1" fill="#888"/><rect x="2" y="414.7" width="3" height="1" fill="#888"/><rect x="2" y="419.6" width="3" height="1" fill="#888"/><rect x="2" y="424.6" width="3" height="1" fill="#888"/><rect x="2" y="429.5" width="3" height="1" fill="#888"/><rect x="0" y="434.5" width="6" height="1" fill="#888"/><rect x="2" y="439.5" width="3" height="1" fill="#888"/><rect x="2" y="444.4" width="3" height="1" fill="#888"/><rect x="2" y="449.4" width="3" height="1" fill="#888"/><rect x="2" y="454.3" width="3" height="1" fill="#888"/><rect x="2" y="459.3" width="3" height="1" fill="#888"/><rect x="2" y="464.2" width="3" height="1" fill="#888"/><rect x="2" y="469.2" width="3" height="1" fill="#888"/><rect x="2" y="474.2" width="3" height="1" fill="#888"/><rect x="2" y="479.1" width="3" height="1" fill="#888"/><rect x="2" y="484.1" width="3" height="1" fill="#888"/><rect x="2" y="489.0" width="3" height="1" fill="#888"/><rect x="0" y="494.0" width="6" height="1" fill="#888"/><rect x="2" y="499.0" width="3" height="1" fill="#888"/><rect x="2" y="503.9" width="3" height="1" fill="#888"/><rect x="2" y="508.9" width="3" height="1" fill="#888"/><rect x="2" y="513.8" width="3" height="1" fill="#888"/><rect x="2" y="518.8" width="3" height="1" fill="#888"/><rect x="2" y="523.8" width="3" height="1" fill="#888"/><rect x="2" y="528.7" width="3" height="1" fill="#888"/><rect x="2" y="533.7" width="3" height="1" fill="#888"/><rect x="2" y="538.6" width="3" height="1" fill="#888"/><rect x="2" y="543.6" width="3" height="1" fill="#888"/><rect x="2" y="548.5" width="3" height="1" fill="#888"/><rect x="0" y="553.5" width="6" height="1" fill="#888"/><rect x="2" y="558.5" width="3" height="1" fill="#888"/><rect x="2" y="563.4" width="3" height="1" fill="#888"/><rect x="2" y="568.4" width="3" height="1" fill="#888"/><rect x="2" y="573.3" width="3" height="1" fill="#888"/><rect x="2" y="578.3" width="3" height="1" fill="#888"/><rect x="2" y="583.2" width="3" height="1" fill="#888"/><rect x="2" y="588.2" width="3" height="1" fill="#888"/><rect x="2" y="593.2" width="3" height="1" fill="#888"/><rect x="2" y="598.1" width="3" height="1" fill="#888"/><rect x="2" y="603.1" width="3" height="1" fill="#888"/><rect x="2" y="608.0" width="3" height="1" fill="#888"/><rect x="0" y="613.0" width="6" height="1" fill="#888"/></svg>
<div class="t ui" style="left:3441.0px;top:1166.0px;font-size:18.90px;color:#bdbdbd;transform:scaleX(0.8565);">0</div>
<div class="t ui" style="left:3440.0px;top:1225.6px;font-size:18.90px;color:#bdbdbd;transform:scaleX(1.1310);">-6</div>
<div class="t ui" style="left:3440.0px;top:1285.2px;font-size:18.90px;color:#bdbdbd;transform:scaleX(1.0254);">-12</div>
<div class="t ui" style="left:3440.0px;top:1344.8px;font-size:18.90px;color:#bdbdbd;transform:scaleX(1.0254);">-18</div>
<div class="t ui" style="left:3440.0px;top:1404.4px;font-size:18.90px;color:#bdbdbd;transform:scaleX(1.0254);">-24</div>
<div class="t ui" style="left:3440.0px;top:1464.0px;font-size:18.90px;color:#bdbdbd;transform:scaleX(1.0254);">-30</div>
<div class="t ui" style="left:3440.0px;top:1523.6px;font-size:18.90px;color:#bdbdbd;transform:scaleX(1.0254);">-36</div>
<div class="t ui" style="left:3440.0px;top:1583.2px;font-size:18.90px;color:#bdbdbd;transform:scaleX(1.0254);">-42</div>
<div class="t ui" style="left:3440.0px;top:1642.8px;font-size:18.90px;color:#bdbdbd;transform:scaleX(1.0254);">-48</div>
<div class="t ui" style="left:3440.0px;top:1702.4px;font-size:18.90px;color:#bdbdbd;transform:scaleX(1.0254);">-54</div>
<div class="t ui" style="left:3440.0px;top:1762.0px;font-size:18.90px;color:#bdbdbd;transform:scaleX(0.8221);">dB</div>
<div class="a" style="left:3336px;top:1791px;width:27px;height:28px;background:#383838;border:1px solid #1e1e1e;"></div>
<div class="t ui" style="left:3344.0px;top:1796.0px;font-size:18.90px;color:#c0c0c0;transform:scaleX(0.8728);">S</div>
<div class="a" style="left:3387px;top:1791px;width:27px;height:28px;background:#383838;border:1px solid #1e1e1e;"></div>
<div class="t ui" style="left:3395.0px;top:1796.0px;font-size:18.90px;color:#c0c0c0;transform:scaleX(0.8728);">S</div>
<div class="a" style="left:0px;top:1829px;width:3479px;height:35px;background:#414141;"></div>
<div class="a" style="left:3431px;top:1829px;width:2px;height:35px;background:#333;"></div>
<div class="t ui" style="left:27.5px;top:1836.1px;font-size:20.35px;color:#d0d0d0;transform:scaleX(1.0380);">Cliquez pour sélectionner ou cliquez sur un espace vide, puis faites glisser vers le rectangle de sélection. Utilisez Maj, Alt et Ctrl pour d'autres options.</div>
<div class="a" style="left:0px;top:1864px;width:3479px;height:93px;background:#060606;"></div>
<div class="a" style="left:3470px;top:1864px;width:2px;height:93px;background:#333;"></div>
<svg class="a" style="left:36px;top:1892px;" width="37" height="38" viewBox="0 0 37 38"><polygon points="0,5 15,3 15,18 0,18" fill="#fff"/><polygon points="17,2.5 37,0 37,18 17,18" fill="#fff"/><polygon points="0,20 15,20 15,35 0,33" fill="#fff"/><polygon points="17,20 37,20 37,38 17,35.5" fill="#fff"/></svg>
<svg class="a" style="left:144px;top:1889px;" width="51" height="42" viewBox="0 0 51 42"><path d="M1 2h17l4 4h28v34h-49z" fill="#f0c850"/><rect x="1" y="9" width="49" height="32" fill="#fadb84"/><rect x="3" y="3" width="14" height="4" fill="#fff4d0"/><path d="M9 24h33v17h-7v-9h-19v9h-7z" fill="#3aa2ea"/></svg>
<svg class="a" style="left:256px;top:1887px;" width="51" height="50" viewBox="0 0 51 50"><defs><radialGradient id="ffg" cx=".6" cy=".35" r=".6"><stop offset="0" stop-color="#ffd840"/><stop offset=".55" stop-color="#ff8a20"/><stop offset="1" stop-color="#d83a10"/></radialGradient><radialGradient id="ffb" cx=".5" cy=".5" r=".5"><stop offset="0" stop-color="#6ab0ff"/><stop offset="1" stop-color="#1a3aa0"/></radialGradient></defs><circle cx="25.5" cy="25" r="24" fill="url(#ffb)"/><path d="M6 14Q2 30 12 42Q25 54 40 44Q50 36 49 22Q46 32 36 34Q26 36 22 28Q30 28 30 22Q22 20 20 14Q14 12 10 18Q9 14 12 8Q6 10 6 14Z" fill="url(#ffg)"/></svg>
<div class="a" style="left:340px;top:1864px;width:111px;height:93px;background:#333333;"></div>
<div class="a" style="left:340px;top:1951px;width:111px;height:6px;background:#b0b0b0;"></div>
<div class="a" style="left:125px;top:1951px;width:92px;height:6px;background:#c0c0c0;"></div>
<div class="a" style="left:461.6px;top:1951px;width:72px;height:6px;background:#b8b8b8;"></div>
<div class="a" style="left:533.6px;top:1951px;width:20px;height:6px;background:#8a8a8a;"></div>
<div class="a" style="left:369px;top:1885px;width:50px;height:49px;background:#2a0a3a;border:3px solid #c050f0;"></div>
<div class="t" style="left:377.0px;top:1893.9px;font-size:31.98px;color:#e2a0ff;font-weight:bold;transform:scaleX(0.9770);">Pr</div>
<div class="a" style="left:481.7px;top:1885px;width:50px;height:49px;background:#3a0a20;border:3px solid #f040a0;"></div>
<div class="t" style="left:494.0px;top:1893.9px;font-size:31.98px;color:#ff5aa8;font-weight:bold;transform:scaleX(0.8798);">Id</div>
<svg class="a" style="left:2988px;top:1902px;" width="30" height="18" viewBox="0 0 30 18"><path d="M2 16L15 3L28 16" fill="none" stroke="#fff" stroke-width="2.2"/></svg>
<svg class="a" style="left:3039px;top:1895px;" width="38" height="30" viewBox="0 0 38 30"><rect x="6" y="9" width="28" height="17" fill="none" stroke="#fff" stroke-width="2.5"/><rect x="9" y="12" width="22" height="11" fill="#fff"/><rect x="34" y="14" width="3" height="7" fill="#fff"/><path d="M4 2v6M8 2v6M2 8h8v3l-3 3h-2l-3-3z" stroke="#fff" stroke-width="1.5" fill="#fff"/></svg>
<svg class="a" style="left:3099px;top:1893px;" width="30" height="32" viewBox="0 0 30 32"><path d="M2 30A26 26 0 0 1 28 4M8 30A20 20 0 0 1 28 10M14 30A14 14 0 0 1 28 16M20 30A8 8 0 0 1 28 22" fill="none" stroke="#fff" stroke-width="2"/><circle cx="26" cy="28" r="3" fill="#fff"/></svg>
<svg class="a" style="left:3148px;top:1894px;" width="38" height="32" viewBox="0 0 38 32"><path d="M2 11h7l9-8v26l-9-8h-7z" fill="none" stroke="#fff" stroke-width="2"/><path d="M22 11q3 5 0 10M26 8q6 8 0 16" fill="none" stroke="#fff" stroke-width="2"/><path d="M31 4q9 12 0 24" fill="none" stroke="#777" stroke-width="2"/></svg>
<div class="t" style="left:3245.6px;top:1875.8px;font-size:30.52px;color:#fff;transform:scaleX(0.7908);">13:34</div>
<div class="t" style="left:3207.6px;top:1917.7px;font-size:30.52px;color:#fff;transform:scaleX(0.8969);">06/02/2017</div>
<svg class="a" style="left:3386px;top:1893px;" width="38" height="36" viewBox="0 0 38 36"><path d="M2 2h34v25h-14l-4 5l-4 -5h-12z" fill="none" stroke="#fff" stroke-width="2.2"/></svg>
<div class="t" style="left:78.0px;top:2020.3px;font-size:49.77px;color:#111;font-family:'Liberation Serif',serif;transform:scaleX(0.9598);">Après avoir modifié l’échelle de la video, je la duplique afin de l’avoir 4 fois ( alt + glisser dans</div>
<div class="t" style="left:1921.0px;top:2020.3px;font-size:49.77px;color:#29a3e0;font-family:'Liberation Serif',serif;">4</div>
<div class="t" style="left:1953.0px;top:2020.3px;font-size:49.77px;color:#111;font-family:'Liberation Serif',serif;">)</div></body></html>
